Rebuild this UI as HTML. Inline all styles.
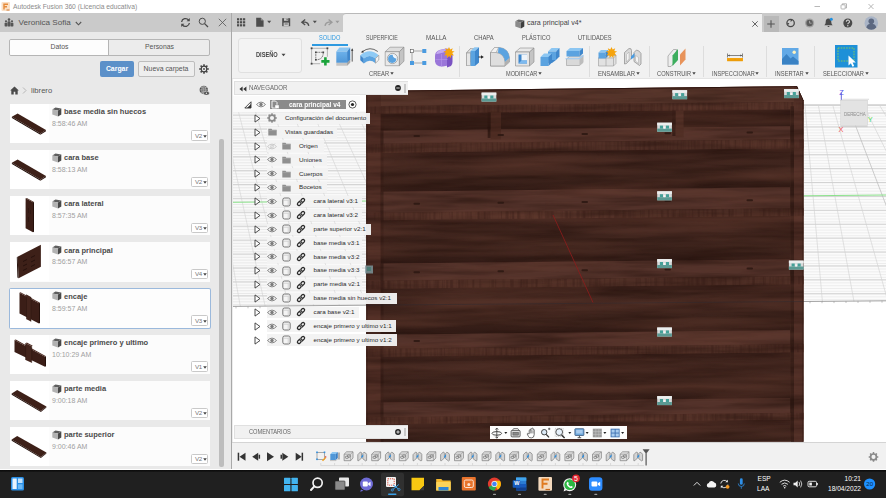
<!DOCTYPE html>
<html lang="es">
<head>
<meta charset="utf-8">
<title>Autodesk Fusion 360 (Licencia educativa)</title>
<style>
*{box-sizing:border-box;margin:0;padding:0}
html,body{width:886px;height:498px;overflow:hidden;background:#fff}
body{font-family:"Liberation Sans",sans-serif;color:#444;position:relative;font-size:8px;line-height:1}
div,span,svg{position:absolute}
.t{white-space:nowrap}
/* title bar */
#titlebar{left:0;top:0;width:886px;height:14px;background:#fff}
#titlebar .t{left:13px;top:3.5px;font-size:6.7px;color:#8a8a8a}
/* left panel */
#lp{left:0;top:13px;width:231px;height:457px;background:#e9e9e9}
#lph{left:0;top:0;width:231px;height:19px;background:#cacaca}
#divider{left:231px;top:13px;width:1px;height:457px;background:#a9a9a9}
.card{left:10px;width:200.3px;height:39.2px;background:#fcfcfc}
.card .th{left:0;top:0;width:39px;height:39px;background:#fff}
.card .nm{left:54px;top:4.3px;font-size:7.5px;font-weight:bold;color:#4a4a4a}
.card .tm{left:42px;top:16.1px;font-size:7px;color:#a0a0a0}
.card .vb{left:181.4px;top:26.7px;width:17.1px;height:10.4px;border:1px solid #c9c9c9;background:#fff;font-size:6.2px;color:#777;border-radius:1.5px}
.card .vb span{left:2.6px;top:1.4px;letter-spacing:-.3px}
.card .vb svg{left:10.8px;top:3.3px}
.card svg.cube{left:42px;top:2.8px}
/* right app */
#qa{left:232px;top:13px;width:111px;height:19px;background:#cacaca}
#tabbar{left:343px;top:13px;width:543px;height:19px;background:#f0f0f0}
#ribbon{left:232px;top:32px;width:654px;height:46.5px;background:#f1f1f1;border-bottom:1px solid #e4e4e4}
/* viewport */
#vp{left:232px;top:80px;width:654px;height:362px;background:#fff;overflow:hidden}
/* timeline */
#tl{left:232px;top:442px;width:654px;height:28px;background:#f1f1f1;border-top:1px solid #d4d4d4}
/* taskbar */
#tb{left:0;top:470px;width:886px;height:28px;background:linear-gradient(#0c0c0c 0,#101010 1.3px,#202020 2.2px,#202020 100%)}
#wl{left:0;top:468.8px;width:886px;height:1.2px;background:#fdfdfd}
.nl{height:11.4px;background:rgba(242,242,242,.96)}
</style>
</head>
<body>
<div id="titlebar">
  <svg width="10" height="10" style="left:1px;top:2px" viewBox="0 0 10 10"><rect x=".5" y="0" width="8.500" height="9" rx="1" fill="#fae0c6"/><path d="M3 7.500V2.300h4M3 4.700h3" stroke="#e58a3a" stroke-width="1.400" fill="none"/><path d="M5.500 8h3" stroke="#c9793a" stroke-width="1"/></svg>
  <span class="t">Autodesk Fusion 360 (Licencia educativa)</span>
  <svg width="80" height="12" style="left:806px;top:0" viewBox="0 0 80 12"><g stroke="#9a9a9a" stroke-width=".7" fill="none"><path d="M8.5 6.5h5.5"/><rect x="35" y="4.8" width="4.2" height="4.2" rx=".8"/><path d="M36.3 4.8v-1h4.2v4.2h-1.2"/><path d="M62.5 4 67.5 9M67.5 4 62.5 9"/></g></svg>
</div>

<!-- LEFT PANEL -->
<div id="lp">
  <div id="lph">
  <svg width="10" height="9" style="left:4px;top:5px" viewBox="0 0 10 9"><g fill="#555"><circle cx="2" cy="3.3" r="1.1"/><rect x="0.6" y="4.8" width="2.8" height="3.6" rx=".6"/><circle cx="8" cy="3.3" r="1.1"/><rect x="6.6" y="4.8" width="2.8" height="3.6" rx=".6"/><circle cx="5" cy="1.6" r="1.3"/><rect x="3.5" y="3.3" width="3" height="5.1" rx=".6"/></g></svg>
  <span class="t" style="left:18.5px;top:5.8px;font-size:8.1px;color:#555">Veronica Sofia</span>
  <svg width="7" height="5" style="left:75px;top:8px" viewBox="0 0 7 5"><path d="M.8 1 3.5 3.8 6.2 1" stroke="#555" stroke-width="1.1" fill="none"/></svg>
  <svg width="11" height="11" style="left:180px;top:4px" viewBox="0 0 11 11"><path d="M1.6 5A4 4 0 0 1 8.6 3M9.4 6A4 4 0 0 1 2.4 8" stroke="#4a4a4a" stroke-width="1.3" fill="none"/><path d="M9.8 1v3.2H6.6zM1.2 10V6.8h3.2z" fill="#4a4a4a"/></svg>
  <svg width="11" height="11" style="left:198px;top:4px" viewBox="0 0 11 11"><circle cx="4.3" cy="4.3" r="3.1" stroke="#4a4a4a" stroke-width="1" fill="none"/><path d="M6.6 6.6 10 10" stroke="#4a4a4a" stroke-width="1.3"/></svg>
  <svg width="9" height="9" style="left:218px;top:5px" viewBox="0 0 9 9"><path d="M.8.8 8.2 8.2M8.2.8.8 8.2" stroke="#555" stroke-width=".8"/></svg>
  </div>
  <div style="left:9px;top:26px;width:201px;height:17px;border:1px solid #b5b5b5;border-radius:2px;background:#ececec"></div>
  <div style="left:10px;top:27px;width:99px;height:15px;background:#fdfdfd;border-right:1px solid #b5b5b5;border-radius:1px 0 0 1px"></div>
  <span class="t" style="left:59.5px;top:31.3px;font-size:6.85px;color:#555;transform:translateX(-50%)">Datos</span>
  <span class="t" style="left:159.5px;top:31.3px;font-size:6.85px;color:#555;transform:translateX(-50%)">Personas</span>
  <div style="left:100px;top:47.5px;width:34px;height:16.5px;background:#5b90c9;border-radius:2px"></div>
  <span class="t" style="left:117px;top:52.8px;font-size:6.9px;font-weight:bold;color:#fff;transform:translateX(-50%)">Cargar</span>
  <div style="left:137.5px;top:47.5px;width:57px;height:16.5px;background:#eee;border:1px solid #bdbdbd;border-radius:2px"></div>
  <span class="t" style="left:166px;top:52.8px;font-size:6.9px;color:#555;transform:translateX(-50%)">Nueva carpeta</span>
  <svg width="10" height="10" style="left:199.1px;top:50.6px" viewBox="0 0 10 10"><circle cx="5" cy="5" r="2.800" fill="none" stroke="#3f3f3f" stroke-width="1.200"/><g stroke="#3f3f3f" stroke-width="1.500"><path d="M5 .2v1.700M5 8.100v1.700M.2 5h1.700M8.100 5h1.700M1.600 1.600l1.200 1.200M7.200 7.200l1.200 1.200M8.400 1.600 7.200 2.800M2.800 7.200 1.600 8.400"/></g><circle cx="5" cy="5" r=".9" fill="#3f3f3f"/></svg>
  <svg width="9" height="9" style="left:9.5px;top:73px" viewBox="0 0 9 9"><path d="M4.5.5.2 4.5h1.1V8.5h2.4V5.8h1.6v2.7h2.4V4.5h1.1z" fill="#4a4a4a"/></svg>
  <svg width="5" height="7" style="left:22px;top:74px" viewBox="0 0 5 7"><path d="M1 .5 4 3.5 1 6.5" stroke="#b0b0b0" stroke-width=".9" fill="none"/></svg>
  <span class="t" style="left:31px;top:73.5px;font-size:7.6px;color:#555">librero</span>
  <svg width="11" height="11" style="left:198.800px;top:72px" viewBox="0 0 11 11"><circle cx="4.800" cy="4.900" r="4.200" fill="#4f4f4f"/><path d="M.6 4.900h8.400M4.800.7v8.400M1.600 2.500q3.200 1.300 6.400 0M1.600 7.300q3.200-1.300 6.400 0" stroke="#dcdcdc" stroke-width=".5" fill="none"/><ellipse cx="4.800" cy="4.900" rx="2" ry="4.200" stroke="#dcdcdc" stroke-width=".5" fill="none"/><ellipse cx="7.400" cy="8.200" rx="2.900" ry="1.900" fill="#4a4a4a" stroke="#e9e9e9" stroke-width=".5"/><circle cx="7.400" cy="8.200" r=".8" fill="#e9e9e9"/></svg>
  <div class="card" style="top:90.8px"><div class="th"></div><svg width="39" height="39" viewBox="0 0 39 39"><polygon points="1.900,12.800 7.600,9.500 36,26 30.400,29.600" fill="#3d2018"/><polygon points="1.900,12.800 30.400,29.600 30.400,30.800 1.900,14" fill="#24100b"/><polygon points="30.400,29.600 36,26 36,27.200 30.400,30.800" fill="#2e1610"/></svg><svg class="cube" width="10" height="10" viewBox="0 0 10 10"><polygon points="0.3,2.4 3.5,0.6 9.3,1.5 6,3.4" fill="#5e5e5e"/><polygon points="0.3,2.4 6,3.4 6,9.4 0.3,7.5" fill="#b2b2b2"/><polygon points="6,3.4 9.3,1.5 9.3,7.4 6,9.4" fill="#484848"/></svg><span class="t nm">base media sin huecos</span><span class="t tm">8:58:46 AM</span><div class="vb"><span class="t">V2</span><svg width="4" height="3" viewBox="0 0 4 3"><path d="M.2.3h3.600L2 2.800z" fill="#444"/></svg></div></div>
  <div class="card" style="top:137.0px"><div class="th"></div><svg width="39" height="39" viewBox="0 0 39 39"><polygon points="1.900,12.800 7.600,9.500 36,26 30.400,29.600" fill="#3d2018"/><polygon points="1.900,12.800 30.400,29.600 30.400,30.800 1.900,14" fill="#24100b"/><polygon points="30.400,29.600 36,26 36,27.200 30.400,30.800" fill="#2e1610"/></svg><svg class="cube" width="10" height="10" viewBox="0 0 10 10"><polygon points="0.3,2.4 3.5,0.6 9.3,1.5 6,3.4" fill="#5e5e5e"/><polygon points="0.3,2.4 6,3.4 6,9.4 0.3,7.5" fill="#b2b2b2"/><polygon points="6,3.4 9.3,1.5 9.3,7.4 6,9.4" fill="#484848"/></svg><span class="t nm">cara base</span><span class="t tm">8:58:13 AM</span><div class="vb"><span class="t">V2</span><svg width="4" height="3" viewBox="0 0 4 3"><path d="M.2.3h3.600L2 2.800z" fill="#444"/></svg></div></div>
  <div class="card" style="top:183.2px"><div class="th"></div><svg width="39" height="39" viewBox="0 0 39 39"><polygon points="15.600,2.300 23,6.300 23,36.300 15.600,32.200" fill="#3b1e17"/><polygon points="15.600,2.300 16.800,1.900 24,5.900 23,6.300" fill="#4a2920"/><polygon points="23,6.300 24,5.900 24,35.800 23,36.300" fill="#24100b"/><path d="M18.500 12v5M18.500 21v5M20.500 14v4" stroke="#2a140f" stroke-width=".6"/></svg><svg class="cube" width="10" height="10" viewBox="0 0 10 10"><polygon points="0.3,2.4 3.5,0.6 9.3,1.5 6,3.4" fill="#5e5e5e"/><polygon points="0.3,2.4 6,3.4 6,9.4 0.3,7.5" fill="#b2b2b2"/><polygon points="6,3.4 9.3,1.5 9.3,7.4 6,9.4" fill="#484848"/></svg><span class="t nm">cara lateral</span><span class="t tm">8:57:35 AM</span><div class="vb"><span class="t">V3</span><svg width="4" height="3" viewBox="0 0 4 3"><path d="M.2.3h3.600L2 2.800z" fill="#444"/></svg></div></div>
  <div class="card" style="top:229.4px"><div class="th"></div><svg width="39" height="39" viewBox="0 0 39 39"><polygon points="7.600,14.700 30.900,2.700 30.900,24.800 8.600,36.300" fill="#3d2018"/><polygon points="7.600,14.700 8.600,36.300 7.400,35.500 6.800,15.300" fill="#24100b"/><path d="M13 19.500l4-2M13 24l4-2M13 28.500l4-2M21 15.500l4-2M21 20l4-2M21 24.500l4-2" stroke="#24100b" stroke-width=".9"/></svg><svg class="cube" width="10" height="10" viewBox="0 0 10 10"><polygon points="0.3,2.4 3.5,0.6 9.3,1.5 6,3.4" fill="#5e5e5e"/><polygon points="0.3,2.4 6,3.4 6,9.4 0.3,7.5" fill="#b2b2b2"/><polygon points="6,3.4 9.3,1.5 9.3,7.4 6,9.4" fill="#484848"/></svg><span class="t nm">cara principal</span><span class="t tm">8:56:57 AM</span><div class="vb"><span class="t">V4</span><svg width="4" height="3" viewBox="0 0 4 3"><path d="M.2.3h3.600L2 2.800z" fill="#444"/></svg></div></div>
  <div class="card" style="top:275.6px;box-shadow:0 0 0 1px #9bb9dc;border-radius:1px;background:#fdfdfd"><div class="th"></div><svg width="39" height="39" viewBox="0 0 39 39"><polygon points="9.500,3.700 29,14.300 29,34.600 9.500,24.400" fill="#3b1e17"/><polygon points="16.500,5.500 21,8 21,32.600 16.500,30.200" fill="#43241c"/><polygon points="9.500,3.700 10.500,3.200 30,13.800 29,14.300" fill="#4a2920"/><polygon points="29,14.300 30,13.800 30,34 29,34.600" fill="#24100b"/><path d="M16.500 5.500V30.200M21 8V32.600" stroke="#2a140f" stroke-width=".5"/></svg><svg class="cube" width="10" height="10" viewBox="0 0 10 10"><polygon points="0.3,2.4 3.5,0.6 9.3,1.5 6,3.4" fill="#5e5e5e"/><polygon points="0.3,2.4 6,3.4 6,9.4 0.3,7.5" fill="#b2b2b2"/><polygon points="6,3.4 9.3,1.5 9.3,7.4 6,9.4" fill="#484848"/></svg><span class="t nm">encaje</span><span class="t tm">8:59:57 AM</span><div class="vb"><span class="t">V3</span><svg width="4" height="3" viewBox="0 0 4 3"><path d="M.2.3h3.600L2 2.800z" fill="#444"/></svg></div></div>
  <div class="card" style="top:321.8px"><div class="th"></div><svg width="39" height="39" viewBox="0 0 39 39"><polygon points="4.500,5 35,21.700 35,31.800 4.500,17" fill="#3b1e17"/><polygon points="4.500,5 5.700,4.400 36,21.200 35,21.700" fill="#4a2920"/><polygon points="35,21.700 36,21.200 36,31.200 35,31.800" fill="#24100b"/><polygon points="15.600,8.200 21.700,11.300 21.700,27.800 15.600,25" fill="#43241c"/><polygon points="15.600,8.200 16.800,7.600 22.800,10.700 21.700,11.300" fill="#4d2b22"/><path d="M15.600 8.200V25M21.700 11.300V27.800" stroke="#2a140f" stroke-width=".5"/></svg><svg class="cube" width="10" height="10" viewBox="0 0 10 10"><polygon points="0.3,2.4 3.5,0.6 9.3,1.5 6,3.4" fill="#5e5e5e"/><polygon points="0.3,2.4 6,3.4 6,9.4 0.3,7.5" fill="#b2b2b2"/><polygon points="6,3.4 9.3,1.5 9.3,7.4 6,9.4" fill="#484848"/></svg><span class="t nm">encaje primero y ultimo</span><span class="t tm">10:10:29 AM</span><div class="vb"><span class="t">V1</span><svg width="4" height="3" viewBox="0 0 4 3"><path d="M.2.3h3.600L2 2.800z" fill="#444"/></svg></div></div>
  <div class="card" style="top:368.0px"><div class="th"></div><svg width="39" height="39" viewBox="0 0 39 39"><polygon points="1.700,12.600 7.200,8.900 36.400,25.500 30.900,29.900" fill="#3d2018"/><polygon points="1.700,12.600 30.900,29.900 30.900,31 1.700,13.700" fill="#24100b"/><polygon points="30.900,29.900 36.400,25.500 36.400,26.600 30.900,31" fill="#2e1610"/></svg><svg class="cube" width="10" height="10" viewBox="0 0 10 10"><polygon points="0.3,2.4 3.5,0.6 9.3,1.5 6,3.4" fill="#5e5e5e"/><polygon points="0.3,2.4 6,3.4 6,9.4 0.3,7.5" fill="#b2b2b2"/><polygon points="6,3.4 9.3,1.5 9.3,7.4 6,9.4" fill="#484848"/></svg><span class="t nm">parte media</span><span class="t tm">9:00:18 AM</span><div class="vb"><span class="t">V2</span><svg width="4" height="3" viewBox="0 0 4 3"><path d="M.2.3h3.600L2 2.800z" fill="#444"/></svg></div></div>
  <div class="card" style="top:414.2px"><div class="th"></div><svg width="39" height="39" viewBox="0 0 39 39"><polygon points="1.700,12.600 7.200,8.900 36.400,25.500 30.900,29.900" fill="#3d2018"/><polygon points="1.700,12.600 30.900,29.900 30.900,31 1.700,13.700" fill="#24100b"/><polygon points="30.900,29.900 36.400,25.500 36.400,26.600 30.900,31" fill="#2e1610"/></svg><svg class="cube" width="10" height="10" viewBox="0 0 10 10"><polygon points="0.3,2.4 3.5,0.6 9.3,1.5 6,3.4" fill="#5e5e5e"/><polygon points="0.3,2.4 6,3.4 6,9.4 0.3,7.5" fill="#b2b2b2"/><polygon points="6,3.4 9.3,1.5 9.3,7.4 6,9.4" fill="#484848"/></svg><span class="t nm">parte superior</span><span class="t tm">9:00:46 AM</span><div class="vb"><span class="t">V2</span><svg width="4" height="3" viewBox="0 0 4 3"><path d="M.2.3h3.600L2 2.800z" fill="#444"/></svg></div></div>
  <div style="left:219px;top:126px;width:4.5px;height:328px;background:#bdbdbd;border-radius:2px"></div>
</div>
<div id="divider"></div>

<!-- RIGHT APP -->
<div id="qa">
  <svg width="111" height="19" viewBox="0 0 111 19" style="left:0;top:0">
    <g fill="#4d4d4d">
      <rect x="5" y="5.2" width="2.2" height="2.2"/><rect x="8" y="5.2" width="2.2" height="2.2"/><rect x="11" y="5.2" width="2.2" height="2.2"/>
      <rect x="5" y="8.2" width="2.2" height="2.2"/><rect x="8" y="8.2" width="2.2" height="2.2"/><rect x="11" y="8.2" width="2.2" height="2.2"/>
      <rect x="5" y="11.2" width="2.2" height="2.2"/><rect x="8" y="11.2" width="2.2" height="2.2"/><rect x="11" y="11.2" width="2.2" height="2.2"/>
      <path d="M24.2 4.8h4.6l2.8 2.8v6.2h-7.4z"/>
      <path d="M35.2 7.8h4l-2 2.400z"/>
      <path d="M50.2 5.2h8v8h-8z"/>
      <path d="M73.2 6.4 69.8 9.2 73.2 12M70 9.200h3.200q3 .3 3.600 3.600" stroke="#4d4d4d" stroke-width="1.300" fill="none"/>
      <path d="M80.800 7.800h4l-2 2.400z"/>
    </g>
    <path d="M28.8 4.8v2.8h2.8" fill="#cacaca" opacity=".55"/>
    <rect x="52" y="5.2" width="4.2" height="2.6" fill="#cacaca"/><rect x="54.6" y="5.7" width="1" height="1.6" fill="#4d4d4d"/><rect x="51.6" y="9.6" width="5.2" height="3.6" fill="#cacaca"/><rect x="52.6" y="10.6" width="3.2" height=".8" fill="#4d4d4d"/>
    <g fill="#9a9a9a">
      <path d="M96.6 6.4 100 9.2 96.6 12M99.800 9.200h-3.200q-3 .3-3.600 3.600" stroke="#9a9a9a" stroke-width="1.300" fill="none"/>
      <path d="M103.400 7.800h4l-2 2.400z"/>
    </g>
  </svg>
</div>
<div id="tabbar">
  <div style="left:0;top:0;width:543px;height:19px;background:#cacaca"></div>
  <div style="left:0;top:0;width:419px;height:19px;background:#f1f1f1;border-top:1.5px solid #b9b9b9;border-radius:3px 0 0 0"></div>
  <svg class="cube" width="10" height="10" style="left:172px;top:5.5px" viewBox="0 0 10 10"><polygon points="0.3,2.3 3.6,0.6 9.3,1.5 6,3.4" fill="#6a6a6a"/><polygon points="0.3,2.3 6,3.4 6,9.4 0.3,7.4" fill="#8b8b8b"/><polygon points="6,3.4 9.3,1.5 9.3,7.4 6,9.4" fill="#3e3e3e"/></svg>
  <span class="t" style="left:184px;top:7.2px;font-size:7.1px;color:#444">cara principal v4*</span>
  <svg width="8" height="8" style="left:407.5px;top:7px" viewBox="0 0 8 8"><path d="M1.3 1.3 6.7 6.7M6.7 1.3 1.3 6.7" stroke="#555" stroke-width=".9"/></svg>
  <div style="left:420.5px;top:3px;width:15.5px;height:15.5px;background:#b9b9b9"></div>
  <svg width="10" height="10" style="left:423.3px;top:5.5px" viewBox="0 0 10 10"><path d="M5 1.2v7.6M1.2 5h7.6" stroke="#555" stroke-width="1.1"/></svg>
  <svg width="110" height="19" style="left:433px;top:0" viewBox="0 0 110 19">
    <circle cx="14.6" cy="10" r="3.7" fill="none" stroke="#4a4a4a" stroke-width="1.3"/><path d="M14.6 6.3v2.6l1.8-1.4zM11 10h2.4l-1.4 2.2z" fill="#4a4a4a"/>
    <circle cx="33.6" cy="10" r="4.6" fill="#a2a2a2"/><circle cx="33.6" cy="10" r="3.2" fill="#5c5c5c"/><path d="M33.6 7.8v2.4h2" stroke="#b5b5b5" stroke-width=".8" fill="none"/>
    <path d="M52.5 5.6c-2 0-2.8 1.6-2.8 3.4 0 1.800-.8 2.600-1.400 3.200h8.400c-.6-.6-1.400-1.400-1.400-3.200 0-1.800-.8-3.400-2.800-3.400zM51.500 13h2a1 1 0 0 1-2 0z" fill="#4a4a4a"/><circle cx="55.300" cy="6.300" r="1.500" fill="#1e8fe0"/>
    <circle cx="71.800" cy="10" r="4.500" fill="#4a4a4a"/><path d="M70.300 8.700a1.600 1.600 0 1 1 2.300 1.400c-.6.300-.8.600-.8 1.200" stroke="#d5d5d5" stroke-width="1.100" fill="none"/><circle cx="71.800" cy="12.700" r=".7" fill="#d5d5d5"/>
    <circle cx="95.300" cy="10" r="6.800" fill="#a9b4c6"/><circle cx="95.300" cy="8.200" r="2.800" fill="#5c6880"/><path d="M90.300 14.600c.6-3 2.400-3.800 5-3.800s4.400.8 5 3.800a6.800 6.800 0 0 1-10 0z" fill="#5c6880"/>
  </svg>
</div>
<div id="ribbon">
  <div style="left:6.3px;top:6px;width:63.5px;height:35px;border:1px solid #e0e0e0;border-radius:3px;background:#f3f3f3"></div>
  <span class="t" style="left:24.2px;top:19.5px;font-size:6.3px;font-weight:bold;color:#444;transform-origin:0 50%;transform:scaleX(.9)">DISEÑO</span>
  <svg width="5" height="4" style="left:48.6px;top:21.1px" viewBox="0 0 5 4"><path d="M.5.7h4L2.500 3.300z" fill="#444"/></svg>
  <span class="t rtab" style="left:86.7px;top:3px;font-size:6.3px;color:#2f9ae0;transform-origin:0 50%;transform:scaleX(0.895)">SOLIDO</span>
  <span class="t rtab" style="left:134.4px;top:3px;font-size:6.3px;color:#555;transform-origin:0 50%;transform:scaleX(0.841)">SUPERFICIE</span>
  <span class="t rtab" style="left:193.7px;top:3px;font-size:6.3px;color:#555;transform-origin:0 50%;transform:scaleX(0.995)">MALLA</span>
  <span class="t rtab" style="left:241.8px;top:3px;font-size:6.3px;color:#555;transform-origin:0 50%;transform:scaleX(0.929)">CHAPA</span>
  <span class="t rtab" style="left:289.7px;top:3px;font-size:6.3px;color:#555;transform-origin:0 50%;transform:scaleX(0.910)">PLÁSTICO</span>
  <span class="t rtab" style="left:345.9px;top:3px;font-size:6.3px;color:#555;transform-origin:0 50%;transform:scaleX(0.903)">UTILIDADES</span>
  <div style="left:80px;top:12px;width:35.500px;height:2px;background:#2f9ae0"></div>
  <span class="t rgrp" style="left:137.0px;top:39.1px;font-size:6.3px;color:#555;transform-origin:0 50%;transform:scaleX(0.909)">CREAR</span>
  <svg width="4" height="3" style="left:158.5px;top:39.6px;margin-left:-.6px" viewBox="0 0 4 3"><path d="M.3.3h3.400L2 2.700z" fill="#444"/></svg>
  <span class="t rgrp" style="left:273.5px;top:39.1px;font-size:6.3px;color:#555;transform-origin:0 50%;transform:scaleX(0.889)">MODIFICAR</span>
  <svg width="4" height="3" style="left:306.4px;top:39.6px;margin-left:-.6px" viewBox="0 0 4 3"><path d="M.3.3h3.400L2 2.700z" fill="#444"/></svg>
  <span class="t rgrp" style="left:365.7px;top:39.1px;font-size:6.3px;color:#555;transform-origin:0 50%;transform:scaleX(0.953)">ENSAMBLAR</span>
  <svg width="4" height="3" style="left:404.2px;top:39.6px;margin-left:-.6px" viewBox="0 0 4 3"><path d="M.3.3h3.400L2 2.700z" fill="#444"/></svg>
  <span class="t rgrp" style="left:425.0px;top:39.1px;font-size:6.3px;color:#555;transform-origin:0 50%;transform:scaleX(0.909)">CONSTRUIR</span>
  <svg width="4" height="3" style="left:460.5px;top:39.6px;margin-left:-.6px" viewBox="0 0 4 3"><path d="M.3.3h3.400L2 2.700z" fill="#444"/></svg>
  <span class="t rgrp" style="left:479.5px;top:39.1px;font-size:6.3px;color:#555;transform-origin:0 50%;transform:scaleX(0.891)">INSPECCIONAR</span>
  <svg width="4" height="3" style="left:523.7px;top:39.6px;margin-left:-.6px" viewBox="0 0 4 3"><path d="M.3.3h3.400L2 2.700z" fill="#444"/></svg>
  <span class="t rgrp" style="left:543.2px;top:39.1px;font-size:6.3px;color:#555;transform-origin:0 50%;transform:scaleX(0.920)">INSERTAR</span>
  <svg width="4" height="3" style="left:573.5px;top:39.6px;margin-left:-.6px" viewBox="0 0 4 3"><path d="M.3.3h3.400L2 2.700z" fill="#444"/></svg>
  <span class="t rgrp" style="left:590.7px;top:39.1px;font-size:6.3px;color:#555;transform-origin:0 50%;transform:scaleX(0.908)">SELECCIONAR</span>
  <svg width="4" height="3" style="left:633.2px;top:39.6px;margin-left:-.6px" viewBox="0 0 4 3"><path d="M.3.3h3.400L2 2.700z" fill="#444"/></svg>
  <div style="left:227px;top:14px;width:1px;height:31px;background:#dddddd"></div>
  <div style="left:357px;top:14px;width:1px;height:31px;background:#dddddd"></div>
  <div style="left:417px;top:14px;width:1px;height:31px;background:#dddddd"></div>
  <div style="left:471px;top:14px;width:1px;height:31px;background:#dddddd"></div>
  <div style="left:534px;top:14px;width:1px;height:31px;background:#dddddd"></div>
  <div style="left:582px;top:14px;width:1px;height:31px;background:#dddddd"></div>
  <svg width="654" height="47" viewBox="232 32 654 47" style="left:0;top:0">
<defs>
<linearGradient id="gB" x1="0" y1="0" x2="0" y2="1"><stop offset="0" stop-color="#6db1ea"/><stop offset="1" stop-color="#4f97d8"/></linearGradient>
<linearGradient id="gG" x1="0" y1="0" x2="1" y2="1"><stop offset="0" stop-color="#e6e6e6"/><stop offset="1" stop-color="#bdbdbd"/></linearGradient>
</defs>
<!-- 1 sketch -->
<g stroke="#8a8a8a" stroke-width=".6" fill="none"><path d="M311.600 48.300h15.800M311.600 48.300v15.400M327.400 48.300v8.500M311.600 63.700h8.500"/><path d="M315.800 52.300h7.500c0 5.300-2.700 7.500-7.500 7.500z" stroke="#555" stroke-width=".7" stroke-dasharray="2 .6"/></g>
<g fill="#444"><rect x="310.700" y="47.400" width="1.800" height="1.800"/><rect x="326.500" y="47.400" width="1.800" height="1.800"/><rect x="310.700" y="62.800" width="1.800" height="1.800"/><rect x="315" y="51.500" width="1.600" height="1.600"/><rect x="322.500" y="51.500" width="1.600" height="1.600"/><rect x="315" y="59" width="1.600" height="1.600"/></g>
<path d="M324.100 57.300h2.600v2.800h2.800v2.600h-2.800v2.800h-2.600v-2.800h-2.800v-2.600h2.800z" fill="#1aa33a"/>
<!-- 2 extrude -->
<polygon points="336.300,62.500 347.100,62.500 350.200,59.500 350.200,62.500 347.100,65.700 336.300,65.700" fill="#c4c4c4"/><polygon points="347.100,62.500 350.200,59.500 350.200,62.500 347.100,65.700" fill="#a5a5a5"/>
<polygon points="336.300,51.500 339.400,47.400 350.200,47.400 347.100,51.500" fill="#8cc6f2"/><polygon points="336.300,51.500 347.100,51.500 347.100,62.700 336.300,62.700" fill="url(#gB)"/><polygon points="347.100,51.500 350.200,47.400 350.200,59.500 347.100,62.700" fill="#3f87cc"/>
<path d="M352.200 49.800v11.800" stroke="#333" stroke-width=".8"/><path d="M351 50.800 352.200 48.300 353.400 50.800z" fill="#333"/>
<!-- 3 revolve -->
<path d="M362.200 51.800q7.800-6 15.600-.3" stroke="#444" stroke-width=".8" fill="none"/><path d="M360.800 52.200 363.200 50.200 363.600 52.800z" fill="#333"/>
<path d="M360.300 55.300q9.200-8 18.500 0l-3.300 3.200q-6-5-11.700 0z" fill="#8ecaf5"/>
<path d="M360.300 55.300 363.800 58.500V63.600L360.300 60.300z" fill="#3f87cc"/>
<path d="M363.800 58.500q5.700-5 11.700 0V63.200q-6-5-11.700.4z" fill="#5ba3e0"/>
<path d="M375.500 58.500 378.800 55.300V60L375.500 63.200z" fill="#f1f1f1" stroke="#8a8a8a" stroke-width=".6"/>
<!-- 4 hole -->
<polygon points="385.200,51.700 390,47.200 404,47.200 399.400,51.700" fill="#dedede" stroke="#8a8a8a" stroke-width=".6"/><polygon points="385.200,51.700 399.400,51.700 399.400,65.700 385.200,65.700" fill="#e9e9e9" stroke="#8a8a8a" stroke-width=".6"/><polygon points="399.400,51.700 404,47.200 404,61.200 399.400,65.700" fill="#c4c4c4" stroke="#8a8a8a" stroke-width=".6"/>
<circle cx="392.500" cy="58.500" r="5.100" fill="#f4f4f4" stroke="#8f8f8f" stroke-width=".7"/><circle cx="392.200" cy="58.800" r="4.100" fill="#5ba3e0"/><path d="M392.600 54.700a4 4 0 0 1 3.900 3.900q-3.300-.2-3.900-3.900z" fill="#f4f8fc"/>
<!-- 5 pattern -->
<path d="M412 51h12M412 51v12M412 63h12" stroke="#8a8a8a" stroke-width=".7" fill="none"/>
<rect x="410.300" y="49.300" width="3.400" height="3.400" fill="#fff" stroke="#555" stroke-width=".6"/><rect x="422.300" y="49" width="4" height="4" fill="#4a9be0"/><rect x="410" y="61" width="4" height="4" fill="#4a9be0"/><rect x="422.300" y="61" width="4" height="4" fill="#4a9be0"/>
<!-- 6 form -->
<path d="M435 56q0-4.500 4.500-6l6.500-1.500q5 0 6 4.500v8q-.5 3.500-4 4.500l-5 1q-7 .5-8-5z" fill="#9a76d9"/><path d="M447 67.500l4-1.500q1.500-1.500 1.500-4v-7l-4 1.500q-1.500 1-1.500 3z" fill="#7a52c2"/><path d="M436 53.500q2-3.500 6-4l5-.8-3.500 3.800-4 1q-2.500.8-3.500 0z" fill="#c3a9f0"/>
<path d="M435.500 59.500h12M441.500 54v13" stroke="#b699ea" stroke-width=".6"/>
<path d="M449 47l1.200 2.600 2.500-1.400-.9 2.700 2.800.6-2.400 1.600 1.700 2.300-2.800-.2-.2 2.800-1.900-2.100-1.900 2.100-.2-2.800-2.800.2 1.700-2.300-2.400-1.600 2.800-.6-.9-2.700 2.500 1.400z" fill="#f5a30d"/>
<!-- 7 press pull -->
<polygon points="466.500,53 470.500,48.500 470.500,62 466.500,65.500" fill="#f3f3f3" stroke="#8a8a8a" stroke-width=".6"/><polygon points="466.500,53 470.500,48.500 474,48.500 470.500,53" fill="#e0e0e0" stroke="#8a8a8a" stroke-width=".5"/><polygon points="466.500,53 470.500,53 470.500,65.500 466.500,65.500" fill="#e6e6e6" stroke="#8a8a8a" stroke-width=".5"/>
<polygon points="470.500,51 474.500,47.200 479,47.200 475,51" fill="#8cc6f2"/><polygon points="470.500,51 475,51 475,66 470.500,66" fill="#5ba3e0"/><polygon points="475,51 479,47.200 479,62.500 475,66" fill="#3f87cc"/>
<path d="M478.500 57h3.500" stroke="#222" stroke-width=".9"/><path d="M481 55.300 483.800 57 481 58.700z" fill="#222"/>
<!-- 8 fillet -->
<path d="M490.500 52.500 494.500 47.500h5q9 1 10 10.500v4l-4.500 4h-14.500z" fill="#d9d9d9" stroke="#8a8a8a" stroke-width=".6"/>
<path d="M490.500 52.500h5.500q8.500 1 9 9.500v4h-14.500z" fill="#dedede" stroke="#8a8a8a" stroke-width=".6"/>
<path d="M490.500 52.500 494.500 47.500h4l-2.500 5z" fill="#f2f2f2" stroke="#8a8a8a" stroke-width=".4"/>
<path d="M498.500 47.500h1q9 1 10 10.500l-4.500 4q-.5-7.500-7-9.300z" fill="#5ba3e0"/><path d="M505 62l4.500-4v4l-4.500 4z" fill="#b0b0b0"/>
<!-- 9 shell -->
<polygon points="515.500,52 520,48 534,48 529.500,52" fill="#e9e9e9" stroke="#8a8a8a" stroke-width=".6"/><polygon points="515.500,52 529.500,52 529.500,66 515.500,66" fill="#e6e6e6" stroke="#8a8a8a" stroke-width=".6"/><polygon points="529.500,52 534,48 534,62 529.500,66" fill="#c4c4c4" stroke="#8a8a8a" stroke-width=".6"/>
<polygon points="518.500,54.500 527,54.500 527,63.500 518.500,63.500" fill="#3f87cc"/><polygon points="521.500,54.500 527,54.500 527,60.500 521.500,60.500" fill="#eef4fa"/><polygon points="518.500,63.500 521.500,60.500 527,60.500 527,63.500" fill="#7dbaf0"/>
<!-- 10 combine -->
<polygon points="548,51.500 551.500,48 559.500,48 556,51.500" fill="#8cc6f2"/><polygon points="548,51.500 556,51.500 556,60 548,60" fill="#5ba3e0"/><polygon points="556,51.500 559.500,48 559.500,56.500 556,60" fill="#3f87cc"/>
<polygon points="540.500,57 544,53.500 552,53.500 548.500,57" fill="#8cc6f2"/><polygon points="540.500,57 548.500,57 548.500,66 540.500,66" fill="#5ba3e0"/><polygon points="548.500,57 552,53.500 552,62.500 548.500,66" fill="#3f87cc"/><polygon points="548.500,60 556,60 552,63 548.500,63" fill="#3f87cc"/>
<!-- 11 split -->
<polygon points="566.500,59 570,56 583,56 583,62.500 579.500,65.500 566.500,65.500" fill="#d9d9d9" stroke="#9a9a9a" stroke-width=".6"/><polygon points="579.500,59 583,56 583,62.500 579.500,65.500" fill="#bdbdbd"/>
<polygon points="566.500,51 570,48 583,48 579.500,51" fill="#8cc6f2"/><polygon points="566.500,51 579.500,51 579.500,56.500 566.500,56.500" fill="#5ba3e0"/><polygon points="579.500,51 583,48 583,53.500 579.500,56.500" fill="#3f87cc"/>
<path d="M565.500 58.700h13.500l4.500-3.500" stroke="#9cc9f2" stroke-width="1.100" fill="none"/>
<!-- 12 new component -->
<polygon points="598.500,58 601,55.500 616,55.500 616,63.500 613.500,66 598.500,66" fill="#e1e1e1" stroke="#9a9a9a" stroke-width=".6"/><path d="M606 58v8M598.500 58h15M613.500 58v8M613.500 58 616 55.500" stroke="#9a9a9a" stroke-width=".6" fill="none"/>
<polygon points="598.500,52.500 601,50 608,50 605.500,52.500" fill="#8cc6f2"/><polygon points="598.500,52.500 605.500,52.500 605.500,58.500 598.500,58.500" fill="#5ba3e0"/><polygon points="605.500,52.500 608,50 608,56 605.500,58.500" fill="#3f87cc"/>
<path d="M611.500 47l1.200 2.600 2.500-1.400-.9 2.700 2.800.6-2.400 1.600 1.700 2.300-2.800-.2-.2 2.800-1.900-2.100-1.900 2.100-.2-2.800-2.800.2 1.700-2.300-2.400-1.600 2.800-.6-.9-2.700 2.500 1.400z" fill="#f5a30d"/>
<!-- 13 joint -->
<path d="M624.500 52.500 629 48.500q2.500-.5 2.500 2v7.500l-5 5.500-2 .5z" fill="#d9d9d9" stroke="#8a8a8a" stroke-width=".7"/><path d="M626.500 54.500 629 52v7l-2.500 3z" fill="#f4f4f4" stroke="#9a9a9a" stroke-width=".4"/>
<path d="M634 52.500 636.500 50q3 .5 4.500 3.500v10.500l-1.500 1.500-5.500-4z" fill="#d9d9d9" stroke="#8a8a8a" stroke-width=".7"/><path d="M635.500 55.500 638.500 57.500v6l-3-2.500z" fill="#f4f4f4" stroke="#9a9a9a" stroke-width=".4"/>
<path d="M631 56.500l3.500-3.500v4l-3.500 2.500z" fill="#4a9be0"/>
<!-- 14 construct -->
<polygon points="668,56 673.500,49.500 676.500,49.500 676.500,59.500 671,66.500 668,66.500" fill="#ededed" stroke="#8a8a8a" stroke-width=".6"/><polygon points="672.500,55.500 678,49 678,60 672.500,66" fill="#3dae5e"/><polygon points="680,54.500 685.500,48.500 685.500,59.500 680,65.500" fill="#e8935a"/>
<!-- 15 inspect -->
<path d="M727.500 53.500v4M742.500 53.500v4M728 55.500h14" stroke="#555" stroke-width=".7"/><path d="M727.800 55.500l2-1v2zM742.200 55.500l-2-1v2z" fill="#555"/><rect x="727" y="58" width="16" height="3.200" fill="#f5a30d"/><path d="M729 59.500v1.700M731 59.500v1.700M733 59.500v1.700M735 59v2.200M737 59.500v1.700M739 59.500v1.700M741 59.500v1.700" stroke="#c77f00" stroke-width=".4"/>
<!-- 16 insert -->
<rect x="782" y="48" width="16.500" height="16.500" fill="#62a9e6"/><path d="M782 64.500v-5.500l4.500-5 4 4.500 2.500-2 5.500 4.500v3.500z" fill="#3a82c4"/><circle cx="794.200" cy="52.200" r="1.700" fill="#fdf2c0"/>
<!-- 17 select -->
<rect x="835" y="45" width="22.500" height="22.500" fill="#1e90d8"/><rect x="838" y="48" width="16" height="13" fill="none" stroke="#8fd14f" stroke-width=".9" stroke-dasharray="1.600 1.100"/><path d="M848.500 55.500v10l2.400-2.300 1.600 3.600 1.700-.8-1.600-3.500h3.200z" fill="#fff"/>
</svg>
  </div>
<div style="left:232px;top:79px;width:1.2px;height:363px;background:#ececec;z-index:3"></div>
<div id="vp">
<svg width="654" height="362" viewBox="232 80 654 362" style="left:0;top:0">
<defs>
<filter id="grain" color-interpolation-filters="sRGB" x="0" y="0" width="100%" height="100%"><feTurbulence type="fractalNoise" baseFrequency="0.012 0.16" numOctaves="3" seed="7" result="n"/><feColorMatrix in="n" type="matrix" values="0 0 0 0 0.13  0 0 0 0 0.06  0 0 0 0 0.04  1.1 0 0 0 -0.42"/></filter>
<filter id="grain2" color-interpolation-filters="sRGB" x="0" y="0" width="100%" height="100%"><feTurbulence type="fractalNoise" baseFrequency="0.02 0.25" numOctaves="2" seed="3" result="n"/><feColorMatrix in="n" type="matrix" values="0 0 0 0 0.50  0 0 0 0 0.32  0 0 0 0 0.26  0 1.5 0 0 -0.62"/></filter>
<filter id="blotch" color-interpolation-filters="sRGB" x="0" y="0" width="100%" height="100%"><feTurbulence type="fractalNoise" baseFrequency="0.005 0.07" numOctaves="2" seed="21" result="n"/><feColorMatrix in="n" type="matrix" values="0 0 0 0 0.42  0 0 0 0 0.25  0 0 0 0 0.2  0 1.2 0 0 -0.5"/></filter>
<filter id="vgrain" color-interpolation-filters="sRGB" x="0" y="0" width="100%" height="100%"><feTurbulence type="fractalNoise" baseFrequency="0.35 0.02" numOctaves="2" seed="11" result="n"/><feColorMatrix in="n" type="matrix" values="0 0 0 0 0.2  0 0 0 0 0.1  0 0 0 0 0.08  1.1 0 0 0 -0.46" result="c"/><feComposite in="c" in2="SourceGraphic" operator="in"/></filter>
<linearGradient id="gBack" x1="0" y1="0" x2="0" y2="1"><stop offset="0" stop-color="#3a211a"/><stop offset=".3" stop-color="#40251e"/><stop offset=".7" stop-color="#3b221b"/><stop offset="1" stop-color="#2f1914"/></linearGradient>
<clipPath id="woodclip"><polygon points="366.3,90.9 797,86.2 803.5,100.4 803.5,441.7 366.3,441.7"/></clipPath>
<clipPath id="gridR"><rect x="803.5" y="105" width="90" height="196.500"/></clipPath>
<clipPath id="gridL"><polygon points="232,112.300 366.500,111 366.500,305.200 232,306.400"/></clipPath>
<g id="mk"><rect x="0" y="0" width="14.700" height="9" fill="#d6dada"/><rect x="0" y="0" width="14.700" height="2.600" fill="#eceeee"/><rect x="0" y="5.900" width="14.700" height="3.100" fill="#5b9a93"/><rect x="2.700" y="2.900" width="3.100" height="3" fill="#45a098"/><rect x="8.700" y="2.900" width="3.100" height="3" fill="#45a098"/><rect x="6.300" y="3.800" width="1.900" height="2.100" fill="#f4f5f5"/></g>
</defs>
<g clip-path="url(#gridR)">
<rect x="803" y="105" width="90" height="197" fill="#fbfbfb"/>
<path d="M803 105.0H886 M803 107.8H886 M803 110.6H886 M803 113.3H886 M803 116.1H886 M803 118.9H886 M803 121.7H886 M803 124.5H886 M803 127.2H886 M803 130.0H886 M803 132.8H886 M803 135.6H886 M803 138.4H886 M803 141.1H886 M803 143.9H886 M803 146.7H886 M803 149.5H886 M803 152.3H886 M803 155.0H886 M803 157.8H886 M803 160.6H886 M803 163.4H886 M803 166.2H886 M803 168.9H886 M803 171.7H886 M803 174.5H886 M803 177.3H886 M803 180.1H886 M803 182.8H886 M803 185.6H886 M803 188.4H886 M803 191.2H886 M803 194.0H886 M803 196.7H886 M803 199.5H886 M803 202.3H886 M803 205.1H886 M803 207.9H886 M803 210.6H886 M803 213.4H886 M803 216.2H886 M803 219.0H886 M803 221.8H886 M803 224.5H886 M803 227.3H886 M803 230.1H886 M803 232.9H886 M803 235.7H886 M803 238.4H886 M803 241.2H886 M803 244.0H886 M803 246.8H886 M803 249.6H886 M803 252.3H886 M803 255.1H886 M803 257.9H886 M803 260.7H886 M803 263.5H886 M803 266.2H886 M803 269.0H886 M803 271.8H886 M803 274.6H886 M803 277.4H886 M803 280.1H886 M803 282.9H886 M803 285.7H886 M803 288.5H886 M803 291.3H886 M803 294.0H886 M803 296.8H886 M803 299.6H886" stroke="#e4e4e4" stroke-width=".6" fill="none"/>
<path d="M803 113.0H886 M803 126.9H886 M803 140.8H886 M803 154.7H886 M803 168.6H886 M803 182.5H886 M803 196.4H886 M803 210.3H886 M803 224.2H886 M803 238.1H886 M803 252.0H886 M803 265.9H886 M803 279.8H886 M803 293.7H886 M803 307.6H886" stroke="#c6c6c6" stroke-width=".7" fill="none"/>
<path d="M805 106L822.8 306 M818.5 106L854.8 306 M833 106L889.2 306 M864 106L962.6 306 M880 106L1000.5 306" stroke="#d0d0d0" stroke-width=".6" fill="none"/><path d="M848 106L924.7 306" stroke="#b8b8b8" stroke-width=".7" fill="none"/>
<path d="M803 195.800 886 195" stroke="#7fe07f" stroke-width=".9"/>
</g>
<path d="M803 105H886" stroke="#a5a5a5" stroke-width=".8"/>
<path d="M803 301.500 886 300.800" stroke="#8a8a8a" stroke-width=".8"/><path d="M810 301.300v2M822 301.200v2M834 301.100v2M846 301v2M858 300.900v2M870 300.800v2M882 300.700v2" stroke="#9a9a9a" stroke-width=".6"/>
<g clip-path="url(#gridL)">
<rect x="232" y="110" width="135" height="197" fill="#f9f9f9"/>
<path d="M232 110.0H367 M232 112.8H367 M232 115.6H367 M232 118.3H367 M232 121.1H367 M232 123.9H367 M232 126.7H367 M232 129.5H367 M232 132.2H367 M232 135.0H367 M232 137.8H367 M232 140.6H367 M232 143.4H367 M232 146.1H367 M232 148.9H367 M232 151.7H367 M232 154.5H367 M232 157.3H367 M232 160.0H367 M232 162.8H367 M232 165.6H367 M232 168.4H367 M232 171.2H367 M232 173.9H367 M232 176.7H367 M232 179.5H367 M232 182.3H367 M232 185.1H367 M232 187.8H367 M232 190.6H367 M232 193.4H367 M232 196.2H367 M232 199.0H367 M232 201.7H367 M232 204.5H367 M232 207.3H367 M232 210.1H367 M232 212.9H367 M232 215.6H367 M232 218.4H367 M232 221.2H367 M232 224.0H367 M232 226.8H367 M232 229.5H367 M232 232.3H367 M232 235.1H367 M232 237.9H367 M232 240.7H367 M232 243.4H367 M232 246.2H367 M232 249.0H367 M232 251.8H367 M232 254.6H367 M232 257.3H367 M232 260.1H367 M232 262.9H367 M232 265.7H367 M232 268.5H367 M232 271.2H367 M232 274.0H367 M232 276.8H367 M232 279.6H367 M232 282.4H367 M232 285.1H367 M232 287.9H367 M232 290.7H367 M232 293.5H367 M232 296.3H367 M232 299.0H367 M232 301.8H367 M232 304.6H367" stroke="#dedede" stroke-width=".6" fill="none"/>
<path d="M232 115.0H367 M232 128.9H367 M232 142.8H367 M232 156.7H367 M232 170.6H367 M232 184.5H367 M232 198.4H367 M232 212.3H367 M232 226.2H367 M232 240.1H367 M232 254.0H367 M232 267.9H367 M232 281.8H367 M232 295.7H367 M232 309.6H367" stroke="#c9c9c9" stroke-width=".7" fill="none"/>
<path d="M222 110L266.0 310 M238 110L290.0 310 M255 110L315.0 310 M273 110L341.0 310 M292 110L368.0 310 M312 110L396.0 310 M333 110L425.0 310 M355 110L455.0 310 M205 110L241.0 310 M188 110L216.0 310" stroke="#d2d2d2" stroke-width=".6" fill="none"/>
<path d="M232 202.300 367 201" stroke="#7fe07f" stroke-width=".9"/>
</g>
<path d="M232 306.400 367 305.200" stroke="#8a8a8a" stroke-width=".8"/><path d="M236 306.400v2M248 306.300v2M260 306.200v2" stroke="#9a9a9a" stroke-width=".6"/>
<g clip-path="url(#woodclip)">
<rect x="366" y="84" width="440" height="360" fill="#41261f"/>
<polygon points="366,84.9 804,80.2 804,101.9 366,106.6" fill="#55342a"/>
<polygon points="381,113.7 790,109.3 790,126.3 381,130.7" fill="#321b15"/>
<polygon points="381,130.7 790,126.3 790,139.3 381,143.7" fill="#53322a"/>
<polygon points="381,113.7 790,109.3 790,114.3 381,118.7" fill="#2f1813" opacity=".3"/>
<polygon points="381,152.7 790,148.3 790,187.3 381,191.7" fill="url(#gBack)"/>
<polygon points="381,191.7 790,187.3 790,208.3 381,212.7" fill="#53322a"/>
<polygon points="381,152.7 790,148.3 790,153.3 381,157.7" fill="#2f1813" opacity=".3"/>
<polygon points="381,220.2 790,215.8 790,259.2 381,263.6" fill="url(#gBack)"/>
<polygon points="381,263.6 790,259.2 790,276.3 381,280.7" fill="#53322a"/>
<polygon points="381,220.2 790,215.8 790,220.8 381,225.2" fill="#2f1813" opacity=".3"/>
<polygon points="381,288.7 790,284.3 790,330.3 381,334.7" fill="url(#gBack)"/>
<polygon points="381,334.7 790,330.3 790,344.3 381,348.7" fill="#53322a"/>
<polygon points="381,288.7 790,284.3 790,289.3 381,293.7" fill="#2f1813" opacity=".3"/>
<polygon points="381,356.7 790,352.3 790,398.0 381,402.4" fill="url(#gBack)"/>
<polygon points="381,402.4 790,398.0 790,412.9 381,417.3" fill="#53322a"/>
<polygon points="381,356.7 790,352.3 790,357.3 381,361.7" fill="#2f1813" opacity=".3"/>
<polygon points="381,424.1 790,419.7 790,441.3 381,445.7" fill="url(#gBack)"/>
<polygon points="381,445.7 790,441.3 790,442.3 381,446.7" fill="#53322a"/>
<polygon points="381,424.1 790,419.7 790,424.7 381,429.1" fill="#2f1813" opacity=".3"/>
<polygon points="366,106.6 804,101.9 804,109.2 366,113.9" fill="#4e2e25"/>
<polygon points="366,143.9 804,139.2 804,148.2 366,152.9" fill="#4e2e25"/>
<polygon points="366,212.9 804,208.2 804,215.7 366,220.4" fill="#4e2e25"/>
<polygon points="366,280.9 804,276.2 804,284.2 366,288.9" fill="#4e2e25"/>
<polygon points="366,348.9 804,344.2 804,352.2 366,356.9" fill="#4e2e25"/>
<polygon points="366,417.5 804,412.8 804,419.6 366,424.3" fill="#4e2e25"/>
<polygon points="366,84.9 381,84.7 381,446.7 366,446.9" fill="#4c2b23"/>
<polygon points="794,80.3 804,80.2 804,442.2 794,442.3" fill="#4e2d25"/>
<polygon points="790.500,106.3 794,106.3 794,442.3 790.500,442.3" fill="#321b15"/>
<polygon points="380.5,113.8 383.5,113.7 383.5,446.7 380.5,446.8" fill="#321a14" opacity=".7"/>
<polygon points="487.7,112.6 490.7,112.6 490.7,138.1 487.7,138.1" fill="#2a1510"/>
<polygon points="490.7,111.6 501,111.4 501,139.4 490.7,139.6" fill="#48281f"/>
<polygon points="672.3,110.6 675.7,110.6 675.7,136 672.3,136" fill="#2a1510"/>
<polygon points="675.7,110 683.6,109.9 683.6,137.5 675.7,137.6" fill="#4b2b22"/>
<rect x="366" y="84" width="440" height="360" filter="url(#grain)" transform="skewY(-0.62)" transform-origin="450 260"/>
<rect x="366" y="84" width="440" height="360" filter="url(#blotch)" transform="skewY(-0.62)" transform-origin="450 260"/>
<rect x="366" y="84" width="440" height="360" filter="url(#grain2)" opacity=".13" transform="skewY(-0.62)" transform-origin="450 260"/>
<g clip-path="none"><polygon points="366,106.6 804,101.9 804,109.2 366,113.9" filter="url(#vgrain)"/></g>
<g clip-path="none"><polygon points="366,143.9 804,139.2 804,148.2 366,152.9" filter="url(#vgrain)"/></g>
<g clip-path="none"><polygon points="366,212.9 804,208.2 804,215.7 366,220.4" filter="url(#vgrain)"/></g>
<g clip-path="none"><polygon points="366,280.9 804,276.2 804,284.2 366,288.9" filter="url(#vgrain)"/></g>
<g clip-path="none"><polygon points="366,348.9 804,344.2 804,352.2 366,356.9" filter="url(#vgrain)"/></g>
<g clip-path="none"><polygon points="366,417.5 804,412.8 804,419.6 366,424.3" filter="url(#vgrain)"/></g>
<rect x="413.5" y="135.0" width="6.5" height="2" rx="1" fill="#2c1712" opacity=".85"/>
<rect x="413.5" y="202.8" width="6.5" height="2" rx="1" fill="#2c1712" opacity=".85"/>
<rect x="413.5" y="271.2" width="6.5" height="2" rx="1" fill="#2c1712" opacity=".85"/>
<rect x="413.5" y="340.1" width="6.5" height="2" rx="1" fill="#2c1712" opacity=".85"/>
<rect x="497.5" y="134.0" width="6.5" height="2" rx="1" fill="#2c1712" opacity=".85"/>
<rect x="497.5" y="201.8" width="6.5" height="2" rx="1" fill="#2c1712" opacity=".85"/>
<rect x="497.5" y="270.2" width="6.5" height="2" rx="1" fill="#2c1712" opacity=".85"/>

<rect x="581.5" y="133.1" width="6.5" height="2" rx="1" fill="#2c1712" opacity=".85"/>
<rect x="581.5" y="200.9" width="6.5" height="2" rx="1" fill="#2c1712" opacity=".85"/>
<rect x="581.5" y="269.3" width="6.5" height="2" rx="1" fill="#2c1712" opacity=".85"/>

<rect x="664.5" y="132.2" width="6.5" height="2" rx="1" fill="#2c1712" opacity=".85"/>
<rect x="664.5" y="200.0" width="6.5" height="2" rx="1" fill="#2c1712" opacity=".85"/>
<rect x="664.5" y="268.4" width="6.5" height="2" rx="1" fill="#2c1712" opacity=".85"/>

<rect x="746.5" y="131.4" width="6.5" height="2" rx="1" fill="#2c1712" opacity=".85"/>
<rect x="746.5" y="199.2" width="6.5" height="2" rx="1" fill="#2c1712" opacity=".85"/>
<rect x="746.5" y="267.6" width="6.5" height="2" rx="1" fill="#2c1712" opacity=".85"/>

<path d="M366.300 91.300 797 86.600 803.500 100.800" stroke="#2e1510" stroke-width="1" fill="none"/>
<path d="M366.800 91V442M803 100V442" stroke="#2e1510" stroke-width="1" fill="none" opacity=".7"/>
<path d="M366 305.200 803 301.500" stroke="#2a2a33" stroke-width=".6" opacity=".7"/>
</g>
<path d="M553 215 593 302.500" stroke="#8f1c1c" stroke-width=".8"/>
<use href="#mk" x="672.4" y="90.2"/>
<use href="#mk" x="784.1" y="89.1"/>
<use href="#mk" x="657.2" y="122.7"/>
<use href="#mk" x="657.2" y="191.3"/>
<use href="#mk" x="657.2" y="259.1"/>
<use href="#mk" x="788.9" y="260.6"/>
<use href="#mk" x="657.2" y="327.5"/>
<use href="#mk" x="657.2" y="396.1"/>
<use href="#mk" x="481.6" y="92.6"/>
<g opacity=".8"><rect x="365" y="265.500" width="8" height="8" fill="#7f9aa0"/><rect x="367" y="267" width="4" height="4" fill="#4f938c"/></g>
</svg>
<div style="left:2px;top:1.2999999999999972px;width:173.600px;height:14px;background:#f1f1f1;border:1px solid #e0e0e0;border-right:none"></div>
<svg width="8" height="6" style="left:6.5px;top:5.5px" viewBox="0 0 8 6"><path d="M3.600.5v5L.4 3zM7.400.5v5L4.200 3z" fill="#333"/></svg>
<span class="t nvh" style="left:16.5px;top:5.299999999999997px;font-size:6.3px;color:#666;transform-origin:0 50%;transform:scaleX(.968)">NAVEGADOR</span>
<svg width="8" height="8" style="left:162px;top:4.299999999999997px" viewBox="0 0 8 8"><circle cx="4" cy="4" r="2.900" fill="#222"/><path d="M2.300 4h3.400" stroke="#eee" stroke-width=".9"/></svg>
<div style="left:172.3px;top:4px;width:1.500px;height:8.500px;background:#c9c9c9"></div>
<div style="left:0px;top:16.299999999999997px;width:128px;height:15.500px;background:#fafafa"></div>
<svg width="8" height="8" style="left:12px;top:20.5px" viewBox="0 0 8 8"><path d="M7 .8V7H.8z" fill="#fff" stroke="#333" stroke-width=".9"/><path d="M7 3v4H3z" fill="#333"/></svg>
<svg width="10" height="7" style="left:24.399999999999977px;top:21.200000000000003px" viewBox="0 0 10 7"><path d="M.5 3.500Q5-1.300 9.500 3.500 5 8.300.5 3.500z" fill="none" stroke="#7c7c7c" stroke-width=".9"/><circle cx="5" cy="3.500" r="1.700" fill="#7c7c7c"/></svg>
<div style="left:37.80000000000001px;top:19.599999999999994px;width:76.700px;height:9.600px;background:#8b8b8b"></div>
<svg width="9" height="9" style="left:39.30000000000001px;top:20px" viewBox="0 0 9 9"><path d="M1 1h3.500l1.500 1.500V8H1z" fill="none" stroke="#fff" stroke-width=".9"/><rect x="4" y="5" width="4" height="3.500" fill="#fff" stroke="#8b8b8b" stroke-width=".4"/></svg>
<span class="t nvr" style="left:56.5px;top:21px;font-size:7px;font-weight:bold;color:#fff;transform-origin:0 50%;transform:scaleX(.93)">cara principal v4</span>
<svg width="9" height="9" style="left:116px;top:20px" viewBox="0 0 9 9"><circle cx="4.500" cy="4.500" r="3.600" fill="#fff" stroke="#333" stroke-width=".8"/><circle cx="4.500" cy="4.500" r="1.600" fill="#222"/></svg>
<svg width="7" height="9" style="left:22.30000000000001px;top:33.900000000000006px" viewBox="0 0 7 9"><path d="M1 .9 6 4.500 1 8.100z" fill="#fff" stroke="#3a3a3a" stroke-width=".9" stroke-linejoin="round"/></svg>
<div class="nl" style="left:34.5px;top:32.7px;width:103.2px"></div>
<svg width="10" height="10" style="left:35.30000000000001px;top:33.4px" viewBox="0 0 10 10"><circle cx="5" cy="5" r="2.900" fill="none" stroke="#8a8a8a" stroke-width="1.700"/><g stroke="#8a8a8a" stroke-width="1.500"><path d="M5 .2v2M5 7.800v2M.2 5h2M7.800 5h2M1.600 1.600l1.400 1.400M7 7l1.400 1.400M8.400 1.600 7 3M3 7 1.600 8.400"/></g></svg>
<span class="t nvt" style="left:53px;top:35.1px;font-size:6.25px;color:#2a2a2a">Configuración del documento</span>
<svg width="7" height="9" style="left:22.30000000000001px;top:47.75px" viewBox="0 0 7 9"><path d="M1 .9 6 4.500 1 8.100z" fill="#fff" stroke="#3a3a3a" stroke-width=".9" stroke-linejoin="round"/></svg>
<div class="nl" style="left:34.5px;top:46.5px;width:70.5px"></div>
<svg width="9" height="8" style="left:35.60000000000002px;top:48.2px" viewBox="0 0 9 8"><path d="M.3.800h3.200l.8 1h4.400v5.700H.3z" fill="#8f8f8f"/><path d="M.3 2.600h8.400" stroke="#b5b5b5" stroke-width=".5"/></svg>
<span class="t nvt" style="left:53px;top:48.9px;font-size:6.25px;color:#2a2a2a">Vistas guardadas</span>
<svg width="7" height="9" style="left:22.30000000000001px;top:61.599999999999994px" viewBox="0 0 7 9"><path d="M1 .9 6 4.500 1 8.100z" fill="#fff" stroke="#3a3a3a" stroke-width=".9" stroke-linejoin="round"/></svg>
<div class="nl" style="left:34.5px;top:60.4px;width:57.5px"></div>
<svg width="10" height="7" style="left:34.80000000000001px;top:62.6px" viewBox="0 0 10 7"><path d="M.5 3.500Q5-1.300 9.500 3.500 5 8.300.5 3.500z" fill="none" stroke="#c4c4c4" stroke-width=".8"/><circle cx="5" cy="3.500" r="1.500" fill="none" stroke="#c4c4c4" stroke-width=".7"/><path d="M2 6.500 8 .5" stroke="#c4c4c4" stroke-width=".7"/></svg>
<svg width="9" height="8" style="left:50.30000000000001px;top:62.1px" viewBox="0 0 9 8"><path d="M.3.800h3.200l.8 1h4.400v5.700H.3z" fill="#8f8f8f"/><path d="M.3 2.600h8.400" stroke="#b5b5b5" stroke-width=".5"/></svg>
<span class="t nvt" style="left:67px;top:62.8px;font-size:6.25px;color:#2a2a2a">Origen</span>
<svg width="7" height="9" style="left:22.30000000000001px;top:75.44999999999999px" viewBox="0 0 7 9"><path d="M1 .9 6 4.500 1 8.100z" fill="#fff" stroke="#3a3a3a" stroke-width=".9" stroke-linejoin="round"/></svg>
<div class="nl" style="left:34.5px;top:74.2px;width:60.5px"></div>
<svg width="10" height="7" style="left:34.80000000000001px;top:76.4px" viewBox="0 0 10 7"><path d="M.5 3.500Q5-1.300 9.500 3.500 5 8.300.5 3.500z" fill="none" stroke="#7c7c7c" stroke-width=".9"/><circle cx="5" cy="3.500" r="1.700" fill="#7c7c7c"/></svg>
<svg width="9" height="8" style="left:50.30000000000001px;top:75.9px" viewBox="0 0 9 8"><path d="M.3.800h3.200l.8 1h4.400v5.700H.3z" fill="#8f8f8f"/><path d="M.3 2.600h8.400" stroke="#b5b5b5" stroke-width=".5"/></svg>
<span class="t nvt" style="left:67px;top:76.6px;font-size:6.25px;color:#2a2a2a">Uniones</span>
<svg width="7" height="9" style="left:22.30000000000001px;top:89.30000000000001px" viewBox="0 0 7 9"><path d="M1 .9 6 4.500 1 8.100z" fill="#fff" stroke="#3a3a3a" stroke-width=".9" stroke-linejoin="round"/></svg>
<div class="nl" style="left:34.5px;top:88.1px;width:61.9px"></div>
<svg width="10" height="7" style="left:34.80000000000001px;top:90.3px" viewBox="0 0 10 7"><path d="M.5 3.500Q5-1.300 9.500 3.500 5 8.300.5 3.500z" fill="none" stroke="#7c7c7c" stroke-width=".9"/><circle cx="5" cy="3.500" r="1.700" fill="#7c7c7c"/></svg>
<svg width="9" height="8" style="left:50.30000000000001px;top:89.8px" viewBox="0 0 9 8"><path d="M.3.800h3.200l.8 1h4.400v5.700H.3z" fill="#8f8f8f"/><path d="M.3 2.600h8.400" stroke="#b5b5b5" stroke-width=".5"/></svg>
<span class="t nvt" style="left:67px;top:90.5px;font-size:6.25px;color:#2a2a2a">Cuerpos</span>
<svg width="7" height="9" style="left:22.30000000000001px;top:103.15px" viewBox="0 0 7 9"><path d="M1 .9 6 4.500 1 8.100z" fill="#fff" stroke="#3a3a3a" stroke-width=".9" stroke-linejoin="round"/></svg>
<div class="nl" style="left:34.5px;top:102.0px;width:60.5px"></div>
<svg width="10" height="7" style="left:34.80000000000001px;top:104.2px" viewBox="0 0 10 7"><path d="M.5 3.500Q5-1.300 9.500 3.500 5 8.300.5 3.500z" fill="none" stroke="#7c7c7c" stroke-width=".9"/><circle cx="5" cy="3.500" r="1.700" fill="#7c7c7c"/></svg>
<svg width="9" height="8" style="left:50.30000000000001px;top:103.7px" viewBox="0 0 9 8"><path d="M.3.800h3.200l.8 1h4.400v5.700H.3z" fill="#8f8f8f"/><path d="M.3 2.600h8.400" stroke="#b5b5b5" stroke-width=".5"/></svg>
<span class="t nvt" style="left:67px;top:104.3px;font-size:6.25px;color:#2a2a2a">Bocetos</span>
<svg width="7" height="9" style="left:22.30000000000001px;top:117.0px" viewBox="0 0 7 9"><path d="M1 .9 6 4.500 1 8.100z" fill="#fff" stroke="#3a3a3a" stroke-width=".9" stroke-linejoin="round"/></svg>
<div class="nl" style="left:34.5px;top:115.8px;width:95.5px"></div>
<svg width="10" height="7" style="left:34.80000000000001px;top:118.0px" viewBox="0 0 10 7"><path d="M.5 3.500Q5-1.300 9.500 3.500 5 8.300.5 3.500z" fill="none" stroke="#7c7c7c" stroke-width=".9"/><circle cx="5" cy="3.500" r="1.700" fill="#7c7c7c"/></svg>
<svg width="9" height="10" style="left:49.80000000000001px;top:116.5px" viewBox="0 0 9 10"><rect x=".8" y="1" width="7.400" height="8" rx="1.800" fill="#f4f4f4" stroke="#555" stroke-width=".8"/><path d="M1.200 3.200h5v5.600M6.200 3.200l1.800-1.600" stroke="#bdbdbd" stroke-width=".6" fill="none"/></svg>
<svg width="10" height="10" style="left:64px;top:116.5px" viewBox="0 0 10 10"><g fill="none" stroke="#2b2b2b" stroke-width="1.300" stroke-linecap="round"><path d="M4.300 5.700 3.200 6.800a1.500 1.500 0 0 1-2.100-2.100L3 2.800a1.500 1.500 0 0 1 2.300.3" transform="translate(.6 1.400)"/><path d="M5.700 4.300 6.800 3.200a1.500 1.500 0 0 1 2.100 2.100L7 7.200a1.500 1.500 0 0 1-2.300-.3" transform="translate(-.6 -1.400)"/></g></svg>
<span class="t nvt" style="left:81.5px;top:118.2px;font-size:6.25px;color:#2a2a2a">cara lateral v3:1</span>
<svg width="7" height="9" style="left:22.30000000000001px;top:130.85000000000002px" viewBox="0 0 7 9"><path d="M1 .9 6 4.500 1 8.100z" fill="#fff" stroke="#3a3a3a" stroke-width=".9" stroke-linejoin="round"/></svg>
<div class="nl" style="left:34.5px;top:129.7px;width:95.5px"></div>
<svg width="10" height="7" style="left:34.80000000000001px;top:131.9px" viewBox="0 0 10 7"><path d="M.5 3.500Q5-1.300 9.500 3.500 5 8.300.5 3.500z" fill="none" stroke="#7c7c7c" stroke-width=".9"/><circle cx="5" cy="3.500" r="1.700" fill="#7c7c7c"/></svg>
<svg width="9" height="10" style="left:49.80000000000001px;top:130.4px" viewBox="0 0 9 10"><rect x=".8" y="1" width="7.400" height="8" rx="1.800" fill="#f4f4f4" stroke="#555" stroke-width=".8"/><path d="M1.200 3.200h5v5.600M6.200 3.200l1.800-1.600" stroke="#bdbdbd" stroke-width=".6" fill="none"/></svg>
<svg width="10" height="10" style="left:64px;top:130.4px" viewBox="0 0 10 10"><g fill="none" stroke="#2b2b2b" stroke-width="1.300" stroke-linecap="round"><path d="M4.300 5.700 3.200 6.800a1.500 1.500 0 0 1-2.100-2.100L3 2.800a1.500 1.500 0 0 1 2.300.3" transform="translate(.6 1.400)"/><path d="M5.700 4.300 6.800 3.200a1.500 1.500 0 0 1 2.100 2.100L7 7.200a1.500 1.500 0 0 1-2.300-.3" transform="translate(-.6 -1.400)"/></g></svg>
<span class="t nvt" style="left:81.5px;top:132.1px;font-size:6.25px;color:#2a2a2a">cara lateral v3:2</span>
<svg width="7" height="9" style="left:22.30000000000001px;top:144.7px" viewBox="0 0 7 9"><path d="M1 .9 6 4.500 1 8.100z" fill="#fff" stroke="#3a3a3a" stroke-width=".9" stroke-linejoin="round"/></svg>
<div class="nl" style="left:34.5px;top:143.5px;width:104.0px"></div>
<svg width="10" height="7" style="left:34.80000000000001px;top:145.7px" viewBox="0 0 10 7"><path d="M.5 3.500Q5-1.300 9.500 3.500 5 8.300.5 3.500z" fill="none" stroke="#7c7c7c" stroke-width=".9"/><circle cx="5" cy="3.500" r="1.700" fill="#7c7c7c"/></svg>
<svg width="9" height="10" style="left:49.80000000000001px;top:144.2px" viewBox="0 0 9 10"><rect x=".8" y="1" width="7.400" height="8" rx="1.800" fill="#f4f4f4" stroke="#555" stroke-width=".8"/><path d="M1.200 3.200h5v5.600M6.200 3.200l1.800-1.600" stroke="#bdbdbd" stroke-width=".6" fill="none"/></svg>
<svg width="10" height="10" style="left:64px;top:144.2px" viewBox="0 0 10 10"><g fill="none" stroke="#2b2b2b" stroke-width="1.300" stroke-linecap="round"><path d="M4.300 5.700 3.200 6.800a1.500 1.500 0 0 1-2.100-2.100L3 2.800a1.500 1.500 0 0 1 2.300.3" transform="translate(.6 1.400)"/><path d="M5.700 4.300 6.800 3.200a1.500 1.500 0 0 1 2.100 2.100L7 7.200a1.500 1.500 0 0 1-2.300-.3" transform="translate(-.6 -1.400)"/></g></svg>
<span class="t nvt" style="left:81.5px;top:145.9px;font-size:6.25px;color:#2a2a2a">parte superior v2:1</span>
<svg width="7" height="9" style="left:22.30000000000001px;top:158.55px" viewBox="0 0 7 9"><path d="M1 .9 6 4.500 1 8.100z" fill="#fff" stroke="#3a3a3a" stroke-width=".9" stroke-linejoin="round"/></svg>
<div class="nl" style="left:34.5px;top:157.4px;width:95.5px"></div>
<svg width="10" height="7" style="left:34.80000000000001px;top:159.6px" viewBox="0 0 10 7"><path d="M.5 3.500Q5-1.300 9.500 3.500 5 8.300.5 3.500z" fill="none" stroke="#7c7c7c" stroke-width=".9"/><circle cx="5" cy="3.500" r="1.700" fill="#7c7c7c"/></svg>
<svg width="9" height="10" style="left:49.80000000000001px;top:158.1px" viewBox="0 0 9 10"><rect x=".8" y="1" width="7.400" height="8" rx="1.800" fill="#f4f4f4" stroke="#555" stroke-width=".8"/><path d="M1.200 3.200h5v5.600M6.200 3.200l1.800-1.600" stroke="#bdbdbd" stroke-width=".6" fill="none"/></svg>
<svg width="10" height="10" style="left:64px;top:158.1px" viewBox="0 0 10 10"><g fill="none" stroke="#2b2b2b" stroke-width="1.300" stroke-linecap="round"><path d="M4.300 5.700 3.200 6.800a1.500 1.500 0 0 1-2.100-2.100L3 2.800a1.500 1.500 0 0 1 2.300.3" transform="translate(.6 1.400)"/><path d="M5.700 4.300 6.800 3.200a1.500 1.500 0 0 1 2.100 2.100L7 7.200a1.500 1.500 0 0 1-2.300-.3" transform="translate(-.6 -1.400)"/></g></svg>
<span class="t nvt" style="left:81.5px;top:159.8px;font-size:6.25px;color:#2a2a2a">base media v3:1</span>
<svg width="7" height="9" style="left:22.30000000000001px;top:172.39999999999998px" viewBox="0 0 7 9"><path d="M1 .9 6 4.500 1 8.100z" fill="#fff" stroke="#3a3a3a" stroke-width=".9" stroke-linejoin="round"/></svg>
<div class="nl" style="left:34.5px;top:171.2px;width:95.5px"></div>
<svg width="10" height="7" style="left:34.80000000000001px;top:173.4px" viewBox="0 0 10 7"><path d="M.5 3.500Q5-1.300 9.500 3.500 5 8.300.5 3.500z" fill="none" stroke="#7c7c7c" stroke-width=".9"/><circle cx="5" cy="3.500" r="1.700" fill="#7c7c7c"/></svg>
<svg width="9" height="10" style="left:49.80000000000001px;top:171.9px" viewBox="0 0 9 10"><rect x=".8" y="1" width="7.400" height="8" rx="1.800" fill="#f4f4f4" stroke="#555" stroke-width=".8"/><path d="M1.200 3.200h5v5.600M6.200 3.200l1.800-1.600" stroke="#bdbdbd" stroke-width=".6" fill="none"/></svg>
<svg width="10" height="10" style="left:64px;top:171.9px" viewBox="0 0 10 10"><g fill="none" stroke="#2b2b2b" stroke-width="1.300" stroke-linecap="round"><path d="M4.300 5.700 3.200 6.800a1.500 1.500 0 0 1-2.100-2.100L3 2.800a1.500 1.500 0 0 1 2.300.3" transform="translate(.6 1.400)"/><path d="M5.700 4.300 6.800 3.200a1.500 1.500 0 0 1 2.100 2.100L7 7.200a1.500 1.500 0 0 1-2.300-.3" transform="translate(-.6 -1.400)"/></g></svg>
<span class="t nvt" style="left:81.5px;top:173.6px;font-size:6.25px;color:#2a2a2a">base media v3:2</span>
<svg width="7" height="9" style="left:22.30000000000001px;top:186.25px" viewBox="0 0 7 9"><path d="M1 .9 6 4.500 1 8.100z" fill="#fff" stroke="#3a3a3a" stroke-width=".9" stroke-linejoin="round"/></svg>
<div class="nl" style="left:34.5px;top:185.1px;width:95.5px"></div>
<svg width="10" height="7" style="left:34.80000000000001px;top:187.2px" viewBox="0 0 10 7"><path d="M.5 3.500Q5-1.300 9.500 3.500 5 8.300.5 3.500z" fill="none" stroke="#7c7c7c" stroke-width=".9"/><circle cx="5" cy="3.500" r="1.700" fill="#7c7c7c"/></svg>
<svg width="9" height="10" style="left:49.80000000000001px;top:185.8px" viewBox="0 0 9 10"><rect x=".8" y="1" width="7.400" height="8" rx="1.800" fill="#f4f4f4" stroke="#555" stroke-width=".8"/><path d="M1.200 3.200h5v5.600M6.200 3.200l1.800-1.600" stroke="#bdbdbd" stroke-width=".6" fill="none"/></svg>
<svg width="10" height="10" style="left:64px;top:185.8px" viewBox="0 0 10 10"><g fill="none" stroke="#2b2b2b" stroke-width="1.300" stroke-linecap="round"><path d="M4.300 5.700 3.200 6.800a1.500 1.500 0 0 1-2.100-2.100L3 2.800a1.500 1.500 0 0 1 2.300.3" transform="translate(.6 1.400)"/><path d="M5.700 4.300 6.800 3.200a1.500 1.500 0 0 1 2.100 2.100L7 7.200a1.500 1.500 0 0 1-2.300-.3" transform="translate(-.6 -1.400)"/></g></svg>
<span class="t nvt" style="left:81.5px;top:187.4px;font-size:6.25px;color:#2a2a2a">base media v3:3</span>
<svg width="7" height="9" style="left:22.30000000000001px;top:200.10000000000002px" viewBox="0 0 7 9"><path d="M1 .9 6 4.500 1 8.100z" fill="#fff" stroke="#3a3a3a" stroke-width=".9" stroke-linejoin="round"/></svg>
<div class="nl" style="left:34.5px;top:198.9px;width:95.5px"></div>
<svg width="10" height="7" style="left:34.80000000000001px;top:201.1px" viewBox="0 0 10 7"><path d="M.5 3.500Q5-1.300 9.500 3.500 5 8.300.5 3.500z" fill="none" stroke="#7c7c7c" stroke-width=".9"/><circle cx="5" cy="3.500" r="1.700" fill="#7c7c7c"/></svg>
<svg width="9" height="10" style="left:49.80000000000001px;top:199.6px" viewBox="0 0 9 10"><rect x=".8" y="1" width="7.400" height="8" rx="1.800" fill="#f4f4f4" stroke="#555" stroke-width=".8"/><path d="M1.200 3.200h5v5.600M6.200 3.200l1.800-1.600" stroke="#bdbdbd" stroke-width=".6" fill="none"/></svg>
<svg width="10" height="10" style="left:64px;top:199.6px" viewBox="0 0 10 10"><g fill="none" stroke="#2b2b2b" stroke-width="1.300" stroke-linecap="round"><path d="M4.300 5.700 3.200 6.800a1.500 1.500 0 0 1-2.100-2.100L3 2.800a1.500 1.500 0 0 1 2.300.3" transform="translate(.6 1.400)"/><path d="M5.700 4.300 6.800 3.200a1.500 1.500 0 0 1 2.100 2.100L7 7.200a1.500 1.500 0 0 1-2.300-.3" transform="translate(-.6 -1.400)"/></g></svg>
<span class="t nvt" style="left:81.5px;top:201.3px;font-size:6.25px;color:#2a2a2a">parte media v2:1</span>
<svg width="7" height="9" style="left:22.30000000000001px;top:213.95px" viewBox="0 0 7 9"><path d="M1 .9 6 4.500 1 8.100z" fill="#fff" stroke="#3a3a3a" stroke-width=".9" stroke-linejoin="round"/></svg>
<div class="nl" style="left:34.5px;top:212.8px;width:130.7px"></div>
<svg width="10" height="7" style="left:34.80000000000001px;top:214.9px" viewBox="0 0 10 7"><path d="M.5 3.500Q5-1.300 9.500 3.500 5 8.300.5 3.500z" fill="none" stroke="#7c7c7c" stroke-width=".9"/><circle cx="5" cy="3.500" r="1.700" fill="#7c7c7c"/></svg>
<svg width="9" height="10" style="left:49.80000000000001px;top:213.4px" viewBox="0 0 9 10"><rect x=".8" y="1" width="7.400" height="8" rx="1.800" fill="#f4f4f4" stroke="#555" stroke-width=".8"/><path d="M1.200 3.200h5v5.600M6.200 3.200l1.800-1.600" stroke="#bdbdbd" stroke-width=".6" fill="none"/></svg>
<svg width="10" height="10" style="left:64px;top:213.4px" viewBox="0 0 10 10"><g fill="none" stroke="#2b2b2b" stroke-width="1.300" stroke-linecap="round"><path d="M4.300 5.700 3.200 6.800a1.500 1.500 0 0 1-2.100-2.100L3 2.800a1.500 1.500 0 0 1 2.300.3" transform="translate(.6 1.400)"/><path d="M5.700 4.300 6.800 3.200a1.500 1.500 0 0 1 2.100 2.100L7 7.200a1.500 1.500 0 0 1-2.300-.3" transform="translate(-.6 -1.400)"/></g></svg>
<span class="t nvt" style="left:81.5px;top:215.1px;font-size:6.25px;color:#2a2a2a">base media sin huecos v2:1</span>
<svg width="7" height="9" style="left:22.30000000000001px;top:227.8px" viewBox="0 0 7 9"><path d="M1 .9 6 4.500 1 8.100z" fill="#fff" stroke="#3a3a3a" stroke-width=".9" stroke-linejoin="round"/></svg>
<div class="nl" style="left:34.5px;top:226.6px;width:92.8px"></div>
<svg width="10" height="7" style="left:34.80000000000001px;top:228.8px" viewBox="0 0 10 7"><path d="M.5 3.500Q5-1.300 9.500 3.500 5 8.300.5 3.500z" fill="none" stroke="#7c7c7c" stroke-width=".9"/><circle cx="5" cy="3.500" r="1.700" fill="#7c7c7c"/></svg>
<svg width="9" height="10" style="left:49.80000000000001px;top:227.3px" viewBox="0 0 9 10"><rect x=".8" y="1" width="7.400" height="8" rx="1.800" fill="#f4f4f4" stroke="#555" stroke-width=".8"/><path d="M1.200 3.200h5v5.600M6.200 3.200l1.800-1.600" stroke="#bdbdbd" stroke-width=".6" fill="none"/></svg>
<svg width="10" height="10" style="left:64px;top:227.3px" viewBox="0 0 10 10"><g fill="none" stroke="#2b2b2b" stroke-width="1.300" stroke-linecap="round"><path d="M4.300 5.700 3.200 6.800a1.500 1.500 0 0 1-2.100-2.100L3 2.800a1.500 1.500 0 0 1 2.300.3" transform="translate(.6 1.400)"/><path d="M5.700 4.300 6.800 3.200a1.500 1.500 0 0 1 2.100 2.100L7 7.200a1.500 1.500 0 0 1-2.300-.3" transform="translate(-.6 -1.400)"/></g></svg>
<span class="t nvt" style="left:81.5px;top:229.0px;font-size:6.25px;color:#2a2a2a">cara base v2:1</span>
<svg width="7" height="9" style="left:22.30000000000001px;top:241.64999999999998px" viewBox="0 0 7 9"><path d="M1 .9 6 4.500 1 8.100z" fill="#fff" stroke="#3a3a3a" stroke-width=".9" stroke-linejoin="round"/></svg>
<div class="nl" style="left:34.5px;top:240.4px;width:129.3px"></div>
<svg width="10" height="7" style="left:34.80000000000001px;top:242.6px" viewBox="0 0 10 7"><path d="M.5 3.500Q5-1.300 9.500 3.500 5 8.300.5 3.500z" fill="none" stroke="#7c7c7c" stroke-width=".9"/><circle cx="5" cy="3.500" r="1.700" fill="#7c7c7c"/></svg>
<svg width="9" height="10" style="left:49.80000000000001px;top:241.1px" viewBox="0 0 9 10"><rect x=".8" y="1" width="7.400" height="8" rx="1.800" fill="#f4f4f4" stroke="#555" stroke-width=".8"/><path d="M1.200 3.200h5v5.600M6.200 3.200l1.800-1.600" stroke="#bdbdbd" stroke-width=".6" fill="none"/></svg>
<svg width="10" height="10" style="left:64px;top:241.1px" viewBox="0 0 10 10"><g fill="none" stroke="#2b2b2b" stroke-width="1.300" stroke-linecap="round"><path d="M4.300 5.700 3.200 6.800a1.500 1.500 0 0 1-2.100-2.100L3 2.800a1.500 1.500 0 0 1 2.300.3" transform="translate(.6 1.400)"/><path d="M5.700 4.300 6.800 3.200a1.500 1.500 0 0 1 2.100 2.100L7 7.200a1.500 1.500 0 0 1-2.300-.3" transform="translate(-.6 -1.400)"/></g></svg>
<span class="t nvt" style="left:81.5px;top:242.8px;font-size:6.25px;color:#2a2a2a">encaje primero y ultimo v1:1</span>
<svg width="7" height="9" style="left:22.30000000000001px;top:255.5px" viewBox="0 0 7 9"><path d="M1 .9 6 4.500 1 8.100z" fill="#fff" stroke="#3a3a3a" stroke-width=".9" stroke-linejoin="round"/></svg>
<div class="nl" style="left:34.5px;top:254.3px;width:130.7px"></div>
<svg width="10" height="7" style="left:34.80000000000001px;top:256.5px" viewBox="0 0 10 7"><path d="M.5 3.500Q5-1.300 9.500 3.500 5 8.300.5 3.500z" fill="none" stroke="#7c7c7c" stroke-width=".9"/><circle cx="5" cy="3.500" r="1.700" fill="#7c7c7c"/></svg>
<svg width="9" height="10" style="left:49.80000000000001px;top:255.0px" viewBox="0 0 9 10"><rect x=".8" y="1" width="7.400" height="8" rx="1.800" fill="#f4f4f4" stroke="#555" stroke-width=".8"/><path d="M1.200 3.200h5v5.600M6.200 3.200l1.800-1.600" stroke="#bdbdbd" stroke-width=".6" fill="none"/></svg>
<svg width="10" height="10" style="left:64px;top:255.0px" viewBox="0 0 10 10"><g fill="none" stroke="#2b2b2b" stroke-width="1.300" stroke-linecap="round"><path d="M4.300 5.700 3.200 6.800a1.500 1.500 0 0 1-2.100-2.100L3 2.800a1.500 1.500 0 0 1 2.300.3" transform="translate(.6 1.400)"/><path d="M5.700 4.300 6.800 3.200a1.500 1.500 0 0 1 2.100 2.100L7 7.200a1.500 1.500 0 0 1-2.300-.3" transform="translate(-.6 -1.400)"/></g></svg>
<span class="t nvt" style="left:81.5px;top:256.7px;font-size:6.25px;color:#2a2a2a">encaje primero y ultimo v1:2</span>
<div style="left:2px;top:345px;width:173.600px;height:13.600px;background:#f1f1f1;border:1px solid #e0e0e0;border-right:none"></div>
<span class="t nvh" style="left:16.5px;top:348.8px;font-size:6.3px;color:#666;transform-origin:0 50%;transform:scaleX(.902)">COMENTARIOS</span>
<svg width="8" height="8" style="left:162px;top:347.8px" viewBox="0 0 8 8"><circle cx="4" cy="4" r="2.900" fill="#222"/><path d="M2.300 4h3.400M4 2.300v3.400" stroke="#eee" stroke-width=".9"/></svg>
<div style="left:172.3px;top:347.5px;width:1.500px;height:8.500px;background:#c9c9c9"></div>
<div style="left:258.4px;top:345.6px;width:136.500px;height:13.900px;background:#fdfdfd"></div>
<svg width="137" height="14" viewBox="490.4 425.6 137 14" style="left:258.4px;top:345.6px">
<g fill="#222"><path d="M504.700 431.500h3l-1.500 2z"/><path d="M568.700 431.500h3l-1.500 2z"/><path d="M586 431.500h3l-1.500 2z"/><path d="M603.800 431.500h3l-1.500 2z"/><path d="M621.500 431.500h3l-1.500 2z"/></g>
<!-- orbit -->
<ellipse cx="497.200" cy="433" rx="4.800" ry="1.800" fill="none" stroke="#333" stroke-width=".9"/><path d="M497.200 428v9.500M495.800 429.200l1.400-1.600 1.400 1.600M495.800 436.300l1.400 1.600 1.400-1.600" stroke="#333" stroke-width=".8" fill="none"/>
<!-- look at -->
<rect x="511.500" y="430" width="9" height="6.500" rx="1" fill="#dcdcdc" stroke="#444" stroke-width=".8"/><rect x="513.300" y="432" width="5.400" height="2.700" fill="#8a8a8a" stroke="#444" stroke-width=".5"/><path d="M512.800 430l1.200-1.800h4.200l1.200 1.800" stroke="#444" stroke-width=".7" fill="none"/>
<!-- hand -->
<g transform="translate(1.600 0)"><path d="M528 433.500v-3.600q.6-.9 1.200 0v-1.200q.6-.9 1.300 0v-.5q.6-.9 1.300 0v1q.6-.8 1.200 0v5q0 3.300-2.800 3.300t-3-1.600l-1.300-2.400q.5-1 1.400-.2z" fill="#fff" stroke="#333" stroke-width=".7"/><path d="M529.200 430v3M530.500 429.500v3.500M531.800 430v3" stroke="#333" stroke-width=".5"/></g>
<!-- zoom -->
<circle cx="544.600" cy="431.800" r="2.700" fill="#dbe9f6" stroke="#333" stroke-width=".9"/><path d="M546.600 434l2.800 3" stroke="#333" stroke-width="1.300"/><path d="M548.400 428.500h2.400M549.600 427.300v2.400" stroke="#333" stroke-width=".7"/>
<!-- zoom window -->
<rect x="555.600" y="428" width="8" height="8" fill="none" stroke="#888" stroke-width=".5" stroke-dasharray="1 1"/><circle cx="559.600" cy="431.700" r="3.400" fill="#e8f1fa" stroke="#444" stroke-width=".9"/><path d="M562 434.500l3 3.200" stroke="#333" stroke-width="1.400"/>
<!-- display -->
<rect x="575.300" y="428.300" width="9" height="6.800" rx=".6" fill="#6fa8dc" stroke="#3d5a80" stroke-width=".8"/><rect x="576.600" y="429.500" width="6.400" height="3.600" fill="#a9cbee"/><path d="M578 437.300h3.600M579.800 435.300v2" stroke="#555" stroke-width="1"/>
<!-- grid -->
<rect x="593.200" y="428.300" width="9" height="8.600" fill="#9a9a9a"/><path d="M596.200 428.300v8.600M599.200 428.300v8.600M593.200 431.200h9M593.200 434h9" stroke="#c9c9c9" stroke-width=".5"/>
<!-- viewports -->
<rect x="611" y="428.300" width="9" height="8.600" fill="#3d6fb0"/><rect x="611.900" y="429.200" width="3.200" height="3" fill="#a9cbee"/><rect x="616" y="429.200" width="3.200" height="3" fill="#a9cbee"/><rect x="611.900" y="433.100" width="3.200" height="3" fill="#a9cbee"/><rect x="616" y="433.100" width="3.200" height="3" fill="#a9cbee"/>
</svg>
<svg width="50" height="50" viewBox="832 86 50 50" style="left:600px;top:6px">
<path d="M841.300 92.500v8" stroke="#3b3bd0" stroke-width=".8"/>
<polygon points="841,100.500 843,99 869,99 867.500,100.500" fill="#e9e9e9" stroke="#d2d2d2" stroke-width=".4"/>
<rect x="840.700" y="100.300" width="27" height="25.400" fill="#e3e3e3" stroke="#d0d0d0" stroke-width=".5"/>
<path d="M840.700 126.500h27" stroke="#c9c9c9" stroke-width="1.200" opacity=".7"/>
</svg>
<span class="t" style="left:611.5px;top:31.2px;font-size:6.2px;color:#8d8d8d;transform-origin:0 50%;transform:scaleX(0.717)" id="derecha">DERECHA</span>
<span class="t vct" style="left:607.2px;top:8.6px;font-size:7.4px;color:#5050e8">Z</span>
<span class="t vct" style="left:606.4px;top:46.3px;font-size:7.4px;color:#ee5050">X</span>
<span class="t vct" style="left:635.8px;top:36.3px;font-size:7.4px;color:#50e050">Y</span>
</div>
<div id="tl">
<svg width="654" height="28" viewBox="232 442 654 28" style="left:0;top:-1px">
<defs>
<g id="tc"><path d="M.5 3 3 .6h6.400v6.200L7 9.500H.5z" fill="#e2e2e2" stroke="#7d7d7d" stroke-width=".7" stroke-linejoin="round"/><path d="M.5 3H7V9.500M7 3 9.400.6" fill="none" stroke="#8a8a8a" stroke-width=".6"/><g fill="none" stroke="#777" stroke-width=".8"><rect x="1.800" y="5" width="3" height="2.200" rx="1"/><rect x="3.700" y="3.800" width="3" height="2.200" rx="1"/></g></g>
<g id="tj"><path d="M.4 3.500 3 .8q1.200 0 1.200 1.400v4.500L1.400 9.500H.4z" fill="#d4d4d4" stroke="#7d7d7d" stroke-width=".7" stroke-linejoin="round"/><path d="M5.400 2.200 6.600 1q1.800.4 2.600 2.200v6l-.8.600-3-2.200z" fill="#d4d4d4" stroke="#7d7d7d" stroke-width=".7" stroke-linejoin="round"/><path d="M4 5l1.800-2v2.400L4 7z" fill="#2f8fe0"/></g>
</defs>
<g fill="#333">
<rect x="237.700" y="452.700" width="1.500" height="8"/><path d="M245.500 452.700v8l-6-4z"/>
<path d="M258.200 452.700v8l-6-4z"/><rect x="258.600" y="454.700" width="1.500" height="4"/>
<path d="M267 452.200v9l7-4.500z"/>
<rect x="280.500" y="454.700" width="1.500" height="4"/><path d="M282.300 452.700v8l6-4z"/>
<path d="M295.700 452.700v8l6-4z"/><rect x="301.600" y="452.700" width="1.500" height="8"/>
</g>
<rect x="317" y="452.300" width="7.500" height="7" fill="none" stroke="#777" stroke-width=".6"/><g fill="#2f8fe0"><rect x="316.200" y="451.500" width="1.600" height="1.600"/><rect x="323.700" y="451.500" width="1.600" height="1.600"/><rect x="316.200" y="458.500" width="1.600" height="1.600"/></g><path d="M322 460.300l3.200-3.200 1 1-3.200 3.200z" fill="#f0a020"/><path d="M324.800 456.700l.8-.8 1 1-.8.800z" fill="#e04040"/>
<polygon points="330.300,454 332.300,452 337.800,452 335.800,454" fill="#8cc6f2"/><rect x="330.300" y="454" width="5.500" height="6" fill="#4f97d8"/><polygon points="335.800,454 337.800,452 337.800,458 335.800,460" fill="#3a7fc4"/><path d="M330 460.600h6l2-2" stroke="#b5b5b5" stroke-width=".8" fill="none"/><path d="M339 452.500v7" stroke="#444" stroke-width=".7"/>
<use href="#tc" x="343.6" y="451.200"/>
<use href="#tj" x="357.4" y="451.200"/>
<use href="#tc" x="371.2" y="451.200"/>
<use href="#tj" x="385.0" y="451.200"/>
<use href="#tc" x="398.8" y="451.200"/>
<use href="#tj" x="412.6" y="451.200"/>
<use href="#tc" x="426.4" y="451.200"/>
<use href="#tj" x="440.2" y="451.200"/>
<use href="#tc" x="454.0" y="451.200"/>
<use href="#tj" x="467.8" y="451.200"/>
<use href="#tc" x="481.6" y="451.200"/>
<use href="#tj" x="495.4" y="451.200"/>
<use href="#tc" x="509.2" y="451.200"/>
<use href="#tj" x="523.0" y="451.200"/>
<use href="#tc" x="536.8" y="451.200"/>
<use href="#tj" x="550.6" y="451.200"/>
<use href="#tc" x="564.4" y="451.200"/>
<use href="#tj" x="578.2" y="451.200"/>
<use href="#tc" x="592.0" y="451.200"/>
<use href="#tj" x="605.8" y="451.200"/>
<use href="#tc" x="619.6" y="451.200"/>
<use href="#tj" x="633.4" y="451.200"/>
<path d="M320.800 465.600H644 M320.8 463v2.500 M334.6 463v2.500 M348.4 463v2.500 M362.2 463v2.500 M376.0 463v2.500 M389.8 463v2.500 M403.6 463v2.500 M417.4 463v2.500 M431.2 463v2.500 M445.0 463v2.500 M458.8 463v2.500 M472.6 463v2.500 M486.4 463v2.500 M500.2 463v2.500 M514.0 463v2.500 M527.8 463v2.500 M541.6 463v2.500 M555.4 463v2.500 M569.2 463v2.500 M583.0 463v2.500 M596.8 463v2.500 M610.6 463v2.500 M624.4 463v2.500 M638.2 463v2.500" stroke="#d2d2d2" stroke-width=".8" fill="none"/>
<path d="M642.600 449.300h7l-2.600 3.400h-1.800z" fill="#555"/><path d="M646.100 452v13.500" stroke="#555" stroke-width="1.200"/>
<g transform="translate(873.500 456.900)"><circle r="2.900" fill="none" stroke="#8a8a8a" stroke-width="1.700"/><g stroke="#8a8a8a" stroke-width="1.500"><path d="M0-4.800v2M0 2.800v2M-4.800 0h2M2.800 0h2M-3.400-3.400l1.400 1.400M2 2l1.400 1.400M3.400-3.400 2-2M-2 2l-1.400 1.400"/></g></g>
</svg>
</div>
<div id="wl"></div>
<div id="tb">
<svg width="886" height="28" viewBox="0 470 886 28" style="left:0;top:0">

<!-- widgets -->
<rect x="11" y="477" width="13" height="13.500" rx="1.500" fill="#2a8fe6"/><rect x="12.500" y="478.500" width="4.200" height="10.500" fill="#e8f3fd"/><rect x="18" y="478.500" width="4.500" height="4.500" fill="#bfe0fb"/><rect x="18" y="484.300" width="4.500" height="4.700" fill="#6bb8f5"/>
<!-- start -->
<g fill="#42b4f0"><rect x="284" y="477.700" width="6.400" height="6.400" rx=".6"/><rect x="291.500" y="477.700" width="6.400" height="6.400" rx=".6"/><rect x="284" y="484.900" width="6.400" height="6.400" rx=".6"/><rect x="291.500" y="484.900" width="6.400" height="6.400" rx=".6"/></g>
<!-- search -->
<circle cx="317.600" cy="482.800" r="4.600" fill="none" stroke="#f2f2f2" stroke-width="1.700"/><path d="M314.300 486.300 311 490" stroke="#f2f2f2" stroke-width="2" stroke-linecap="round"/>
<!-- task view -->
<rect x="339" y="477.500" width="10" height="9" rx=".8" fill="#e8e8e8"/><rect x="335" y="481" width="10" height="9" rx=".8" fill="#8a8a8a" stroke="#2a2a2a" stroke-width=".6"/>
<!-- chat -->
<circle cx="366.500" cy="484" r="6.500" fill="#6f6bd6"/><path d="M361 489.500l-.8 2.300 3.300-1z" fill="#6f6bd6"/><rect x="362.800" y="481.600" width="5" height="4.800" rx="1" fill="#fff"/><path d="M368.200 483.300l2.300-1.500v4.400l-2.300-1.500z" fill="#fff"/>
<!-- snip -->
<rect x="381" y="472.700" width="23" height="23.500" rx="2" fill="#303030"/>
<rect x="386" y="477" width="10" height="10" rx="1" fill="#f4f4f4"/><rect x="387.800" y="478.800" width="6.400" height="6.400" fill="none" stroke="#d8402a" stroke-width=".9" stroke-dasharray="1.200 .9"/><path d="M393 485l5.500 4M398.800 484.500l-6 5" stroke="#3aa0e8" stroke-width="1"/><circle cx="392.300" cy="490" r="1.100" fill="none" stroke="#3aa0e8" stroke-width=".8"/><circle cx="399" cy="489.600" r="1.100" fill="none" stroke="#3aa0e8" stroke-width=".8"/>
<rect x="388" y="493.500" width="8.500" height="1.500" rx=".7" fill="#3aa0e8"/>
<!-- sticky -->
<path d="M411.500 477.700h12.500v8l-4.500 4.500h-8z" fill="#f8c812"/><path d="M424 485.700v4.500h-4.500z" fill="#3a3a3a"/>
<!-- explorer -->
<path d="M436.200 479h5l1.500 1.500h8v10h-14.500z" fill="#f5b92e"/><rect x="436.200" y="482" width="14.500" height="8.500" rx=".6" fill="#fbd35a"/><rect x="438.500" y="487" width="10" height="3.500" fill="#2f86d6"/>
<!-- orange -->
<rect x="461.800" y="477" width="14" height="13.500" rx="1" fill="#e8732c"/><rect x="464.300" y="480" width="9" height="7.500" rx="1.500" fill="none" stroke="#fbe3d2" stroke-width="1"/><circle cx="468.800" cy="484.500" r="1.500" fill="#fbe3d2"/>
<!-- chrome -->
<circle cx="494.400" cy="484" r="6.500" fill="#e33b2e"/><path d="M494.400 484 488.770 487.250A6.500 6.500 0 0 0 494.400 490.500L497.650 484.870z" fill="#2da94f"/><path d="M494.400 484l3.250 5.630-3.250.87A6.500 6.500 0 0 0 500.030 480.750H494.400z" fill="#fbbc05"/><path d="M494.400 490.500a6.500 6.500 0 0 1-5.630-3.250L494.400 484z" fill="#2da94f"/><circle cx="494.400" cy="484" r="3" fill="#f4f4f4"/><circle cx="494.400" cy="484" r="2.300" fill="#4285f4"/>
<!-- word -->
<rect x="516" y="477.500" width="10.300" height="13" rx="1" fill="#2b7cd3"/><rect x="516" y="484" width="10.300" height="3.300" fill="#185abd"/><rect x="516" y="487.300" width="10.300" height="3.200" fill="#103f91"/><rect x="516" y="477.500" width="10.300" height="3.300" fill="#41a5ee"/><rect x="512.700" y="480.300" width="7.500" height="7.500" rx=".8" fill="#185abd"/>
<!-- fusion -->
<rect x="538.400" y="477" width="13.600" height="13.800" rx="1" fill="#f3d9bd"/><path d="M542.500 488.500v-9h6.500M542.500 483.800h5" stroke="#e07a1f" stroke-width="1.900" fill="none"/><path d="M545.500 489.500h4.500" stroke="#c9691a" stroke-width="1.200"/>
<!-- whatsapp -->
<circle cx="569.700" cy="484.700" r="6.500" fill="#f4f4f4"/><path d="M563.600 491.400l1-3.500 2.300 2.200z" fill="#f4f4f4"/><circle cx="569.700" cy="484.700" r="5.400" fill="#2cb742"/><path d="M567.200 482.200q.6-.7 1.100 0l.5 1.200-.6.800q.8 1.600 2.300 2.300l.8-.6 1.200.6q.4.600-.2 1.200-1.200.9-3-.2-2.200-1.500-2.700-3.500-.3-1 .6-1.800z" fill="#fff"/>
<circle cx="576" cy="478.300" r="3.900" fill="#e0252e"/>
<!-- zoom -->
<rect x="589" y="477.300" width="13.400" height="13.400" rx="3" fill="#2d8cff"/><rect x="591.500" y="481.500" width="5.800" height="5" rx="1" fill="#fff"/><path d="M597.800 483.300l2.400-1.600v4.600l-2.400-1.600z" fill="#fff"/>
<!-- indicators -->
<g fill="#9a9a9a"><rect x="493" y="493.800" width="3" height="1.300" rx=".6"/><rect x="518" y="493.800" width="3" height="1.300" rx=".6"/><rect x="543.700" y="493.800" width="3" height="1.300" rx=".6"/><rect x="568.300" y="493.800" width="3" height="1.300" rx=".6"/><rect x="594.300" y="493.800" width="3" height="1.300" rx=".6"/></g>
<!-- tray -->
<path d="M693.800 485.500l3.200-3.200 3.200 3.200" stroke="#f0f0f0" stroke-width=".9" fill="none"/>
<path d="M708.500 487.500a2.300 2.300 0 0 1 .3-4.500 3 3 0 0 1 5.500-.5 2.600 2.600 0 0 1 .2 5z" fill="#f4f4f4"/>
<path d="M720.800 483.500a3.600 3.600 0 0 1 6.400-1.800M727.800 484.600a3.600 3.600 0 0 1-6.400 1.800" stroke="#f0f0f0" stroke-width=".9" fill="none"/><path d="M727.800 479.800v2.500h-2.500zM720.800 488.300v-2.500h2.500z" fill="#f0f0f0"/><circle cx="727.600" cy="486.800" r="1.900" fill="#f59a23"/>
<rect x="739.900" y="478.300" width="2.800" height="6.500" rx="1.400" fill="#2f8fe6"/><path d="M738.300 483.500a3 3 0 0 0 6 0M741.300 486.500v2.300" stroke="#2f8fe6" stroke-width=".8" fill="none"/>
<g fill="none" stroke="#f0f0f0" stroke-width=".9"><path d="M779.800 482.300q4.900-4.300 9.800 0M781.500 484.300q3.200-2.800 6.400 0M783.100 486.200q1.600-1.400 3.200 0"/></g><circle cx="784.700" cy="487.700" r=".8" fill="#f0f0f0"/>
<path d="M793.500 482.700h1.800l2.400-2.200v7l-2.400-2.200h-1.800z" fill="#f0f0f0"/><path d="M799 482q1.400 2 0 4M800.600 480.600q2.400 3.400 0 6.800" stroke="#f0f0f0" stroke-width=".8" fill="none"/>
<rect x="808" y="481.300" width="8.500" height="5.500" rx="1.200" fill="none" stroke="#f0f0f0" stroke-width=".9"/><rect x="809.300" y="482.600" width="2.600" height="2.900" fill="#f0f0f0"/><path d="M817.300 483v2.200" stroke="#f0f0f0" stroke-width="1"/>
<circle cx="869.600" cy="484" r="5.600" fill="#1e90ff"/>

</svg>
<span class="t tbt" style="left:514.300px;top:11.300px;font-size:5.500px;font-weight:bold;color:#fff">W</span>
<span class="t tbt" style="left:574.1px;top:4.9px;font-size:7px;color:#fff">5</span>
<span class="t tbt" style="left:757.500px;top:6px;font-size:6.600px;color:#fff">ESP</span>
<span class="t tbt" style="left:757px;top:16px;font-size:6.600px;color:#fff">LAA</span>
<span class="t tbt" style="right:25px;top:6px;font-size:6.600px;color:#fff">10:21</span>
<span class="t tbt" style="right:25px;top:16px;font-size:6.600px;color:#fff">18/04/2022</span>
<span class="t tbt" style="left:866.200px;top:11px;font-size:6.200px;color:#0a2a4a">20</span>
</div>
</body>
</html>
